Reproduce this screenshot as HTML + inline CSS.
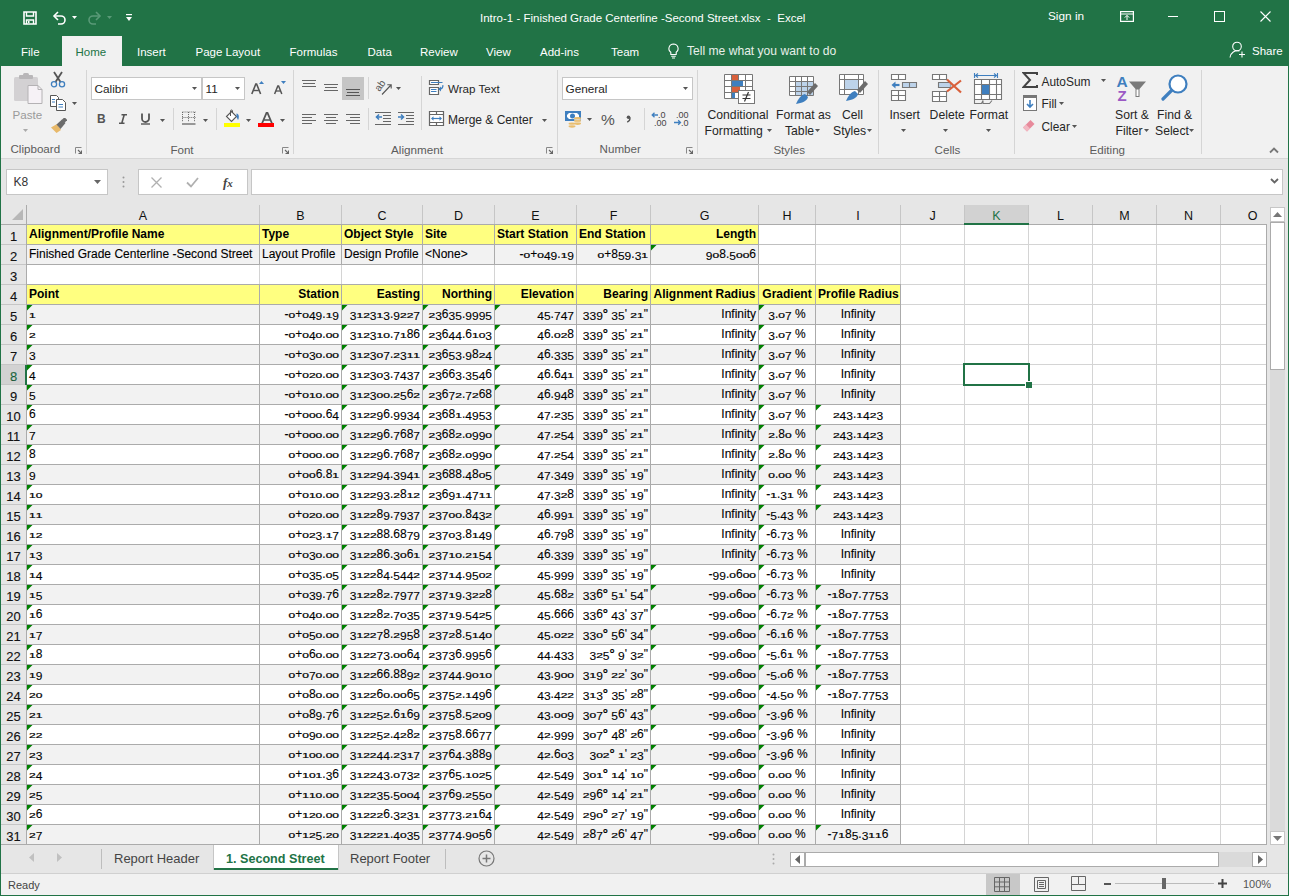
<!DOCTYPE html><html><head><meta charset="utf-8"><style>*{margin:0;padding:0}
html,body{width:1289px;height:896px;overflow:hidden;background:#217346;font-family:"Liberation Sans",sans-serif;position:relative}
.r{position:absolute;display:block}
.t{position:absolute;white-space:pre;line-height:20px}
.c i{font-style:normal;display:inline-block}
.c i.x{-webkit-text-stroke:0.35px #000;transform:scaleY(.66);transform-origin:0 13px}
.c i.d{transform:translateY(2.2px) scaleY(.92);transform-origin:0 13px}
.c u{text-decoration:none;font-weight:700;font-size:13px;line-height:0}
.c{position:absolute;white-space:pre;-webkit-text-stroke:0.1px #000;line-height:19px;height:19px;font-size:12px;color:#000;padding:0 2px;box-sizing:border-box;overflow:hidden}
</style></head><body><div class="r" style="left:0px;top:0px;width:1289px;height:66px;background:#217346;"></div>
<svg class="r" style="left:23px;top:11px;" width="14" height="14" viewBox="0 0 14 14"><path d="M1 1H13V13H1Z" fill="none" stroke="#fff" stroke-width="1.6"/><path d="M3.5 1V5H10.5V1" fill="none" stroke="#fff" stroke-width="1.4"/><path d="M3.5 13V9H10.5V13" fill="none" stroke="#fff" stroke-width="1.4"/><rect x="5" y="10" width="1.5" height="2" fill="#fff"/></svg>
<svg class="r" style="left:52px;top:10px;" width="15" height="15" viewBox="0 0 15 15"><path d="M2 6H9A4 4 0 0 1 9 14H6" fill="none" stroke="#fff" stroke-width="1.6"/><path d="M6 2L2 6L6 10" fill="none" stroke="#fff" stroke-width="1.6"/></svg>
<svg class="r" style="left:72px;top:16px;" width="5" height="3" viewBox="0 0 5 3"><path d="M0 0H5L2.5 3Z" fill="#fff"/></svg>
<svg class="r" style="left:87px;top:10px;" width="15" height="15" viewBox="0 0 15 15"><path d="M13 6H6A4 4 0 0 0 6 14H9" fill="none" stroke="#5a9a78" stroke-width="1.6"/><path d="M9 2L13 6L9 10" fill="none" stroke="#5a9a78" stroke-width="1.6"/></svg>
<svg class="r" style="left:107px;top:16px;" width="5" height="3" viewBox="0 0 5 3"><path d="M0 0H5L2.5 3Z" fill="#5a9a78"/></svg>
<svg class="r" style="left:126px;top:14px;" width="6" height="8" viewBox="0 0 6 8"><rect x="0" y="0" width="6" height="1.2" fill="#fff"/><path d="M0 3H6L3 7Z" fill="#fff"/></svg>
<div class="t" style="left:480px;top:8.02px;font-size:11.5px;color:#fff;font-weight:400;">Intro-1 - Finished Grade Centerline -Second Street.xlsx&nbsp; -&nbsp; Excel</div>
<div class="t" style="left:1048px;top:6.41px;font-size:11.8px;color:#fff;font-weight:400;">Sign in</div>
<svg class="r" style="left:1120px;top:11px;" width="14" height="11" viewBox="0 0 14 11"><rect x="0.6" y="0.6" width="12.8" height="9.8" fill="none" stroke="#fff" stroke-width="1.2"/><path d="M0.6 3H13.4" stroke="#fff" stroke-width="1"/><path d="M7 9V4.5M4.8 6.6L7 4.4L9.2 6.6" fill="none" stroke="#fff" stroke-width="1"/></svg>
<div class="r" style="left:1168px;top:16px;width:10px;height:1px;background:#fff;"></div>
<svg class="r" style="left:1214px;top:11px;" width="11" height="11" viewBox="0 0 11 11"><rect x="0.5" y="0.5" width="10" height="10" fill="none" stroke="#fff" stroke-width="1"/></svg>
<svg class="r" style="left:1260px;top:11px;" width="11" height="11" viewBox="0 0 11 11"><path d="M0.5 0.5L10.5 10.5M10.5 0.5L0.5 10.5" stroke="#fff" stroke-width="1.1"/></svg>
<div class="r" style="left:62px;top:36px;width:60px;height:30px;background:#F1F1F1;"></div>
<div class="t" style="left:21px;top:41.52px;font-size:11.5px;color:#fff;font-weight:400;">File</div>
<div class="t" style="left:75.5px;top:41.52px;font-size:11.5px;color:#217346;font-weight:400;">Home</div>
<div class="t" style="left:137px;top:41.52px;font-size:11.5px;color:#fff;font-weight:400;">Insert</div>
<div class="t" style="left:195.5px;top:41.52px;font-size:11.5px;color:#fff;font-weight:400;">Page Layout</div>
<div class="t" style="left:289.5px;top:41.52px;font-size:11.5px;color:#fff;font-weight:400;">Formulas</div>
<div class="t" style="left:367.5px;top:41.52px;font-size:11.5px;color:#fff;font-weight:400;">Data</div>
<div class="t" style="left:420px;top:41.52px;font-size:11.5px;color:#fff;font-weight:400;">Review</div>
<div class="t" style="left:486px;top:41.52px;font-size:11.5px;color:#fff;font-weight:400;">View</div>
<div class="t" style="left:540px;top:41.52px;font-size:11.5px;color:#fff;font-weight:400;">Add-ins</div>
<div class="t" style="left:611px;top:41.52px;font-size:11.5px;color:#fff;font-weight:400;">Team</div>
<svg class="r" style="left:667px;top:43px;" width="13" height="16" viewBox="0 0 13 16"><path d="M6.5 1A4.6 4.6 0 0 0 3.8 9.3V11.5H9.2V9.3A4.6 4.6 0 0 0 6.5 1Z" fill="none" stroke="#fff" stroke-width="1.1"/><path d="M4.2 13.2H8.8M5 15H8" stroke="#fff" stroke-width="1.1"/></svg>
<div class="t" style="left:687px;top:41.31px;font-size:12.1px;color:#e8f0ea;font-weight:400;">Tell me what you want to do</div>
<svg class="r" style="left:1229px;top:41px;" width="18" height="17" viewBox="0 0 18 17"><circle cx="8" cy="5.5" r="4.3" fill="none" stroke="#fff" stroke-width="1.1"/><path d="M1 16.5A7.5 7.5 0 0 1 10.5 10" fill="none" stroke="#fff" stroke-width="1.1"/><path d="M13 10.5V16.5M10 13.5H16" stroke="#fff" stroke-width="1.1"/></svg>
<div class="t" style="left:1252px;top:41.02px;font-size:11.5px;color:#fff;font-weight:400;">Share</div>
<div class="r" style="left:1px;top:66px;width:1287px;height:92px;background:#F1F1F1;"></div>
<div class="r" style="left:1px;top:158px;width:1287px;height:1px;background:#D6D6D6;"></div>
<div class="r" style="left:86px;top:70px;width:1px;height:84px;background:#D5D5D5;"></div>
<div class="r" style="left:293px;top:70px;width:1px;height:84px;background:#D5D5D5;"></div>
<div class="r" style="left:557px;top:70px;width:1px;height:84px;background:#D5D5D5;"></div>
<div class="r" style="left:697px;top:70px;width:1px;height:84px;background:#D5D5D5;"></div>
<div class="r" style="left:878px;top:70px;width:1px;height:84px;background:#D5D5D5;"></div>
<div class="r" style="left:1014px;top:70px;width:1px;height:84px;background:#D5D5D5;"></div>
<div class="r" style="left:1201px;top:70px;width:1px;height:84px;background:#D5D5D5;"></div>
<svg class="r" style="left:13px;top:73px;" width="30" height="32" viewBox="0 0 30 32"><rect x="1" y="4" width="24" height="24" rx="1.5" fill="#d3d1d3"/><rect x="6" y="2" width="14" height="4" rx="1" fill="#b9b7b9"/><rect x="10" y="0" width="6" height="4" rx="1.5" fill="#b9b7b9"/><path d="M15 12.5H25L29 16.5V30.5H15Z" fill="#f6f2f6" stroke="#b4b2b4" stroke-width="1"/><path d="M25 12.5V16.5H29" fill="none" stroke="#b4b2b4" stroke-width="1"/></svg>
<div class="t" style="left:12.6px;top:104.58px;font-size:11.6px;color:#9a9a9a;font-weight:400;">Paste</div>
<svg class="r" style="left:23px;top:129px;" width="5" height="3" viewBox="0 0 5 3"><path d="M0 0H5L2.5 3Z" fill="#aaa"/></svg>
<svg class="r" style="left:50px;top:71px;" width="16" height="17" viewBox="0 0 16 17"><path d="M4 1L10.5 11M12 1L5.5 11" stroke="#555" stroke-width="1.8"/><circle cx="4" cy="13.2" r="2.6" fill="none" stroke="#3f7fbf" stroke-width="1.3"/><circle cx="12" cy="13.2" r="2.6" fill="none" stroke="#3f7fbf" stroke-width="1.3"/></svg>
<svg class="r" style="left:50px;top:95px;" width="16" height="16" viewBox="0 0 16 16"><path d="M0.5 0.5H6.5L8.5 2.5V11.5H0.5Z" fill="#fff" stroke="#555" stroke-width="1"/><path d="M6.5 4.5H12.5L15.5 7.5V15.5H6.5Z" fill="#fff" stroke="#555" stroke-width="1"/><path d="M2 4.5H5M2 7H5M8.5 9.5H13M8.5 12H13" stroke="#3f7fbf" stroke-width="1"/></svg>
<svg class="r" style="left:72px;top:102px;" width="5" height="3" viewBox="0 0 5 3"><path d="M0 0H5L2.5 3Z" fill="#555"/></svg>
<svg class="r" style="left:50px;top:118px;" width="17" height="16" viewBox="0 0 17 16"><path d="M1 9.5L7 6L11 12L6.5 15Z" fill="#e8b96a"/><path d="M6.5 6.5L12 1.5L15.5 5L10.5 11Z" fill="#6b6b6b"/><rect x="12.5" y="0" width="4" height="4" transform="rotate(45 14.5 2)" fill="#6b6b6b"/></svg>
<div class="t" style="left:10.5px;top:139.48px;font-size:11.6px;color:#5c5c5c;font-weight:400;">Clipboard</div>
<svg class="r" style="left:75px;top:147px;" width="7" height="7" viewBox="0 0 7 7"><path d="M0.5 6.5V0.5H6.5" fill="none" stroke="#888" stroke-width="1"/><path d="M3 3L6.5 6.5M6.5 3.5V6.5H3.5" fill="none" stroke="#666" stroke-width="1.1"/></svg>
<div class="r" style="left:91px;top:77px;width:111px;height:23px;background:#fff;box-sizing:border-box;border:1px solid #C6C6C6;"></div>
<div class="r" style="left:202px;top:77px;width:43px;height:23px;background:#fff;box-sizing:border-box;border:1px solid #C6C6C6;"></div>
<div class="t" style="left:94.5px;top:78.91px;font-size:11.8px;color:#262626;font-weight:400;">Calibri</div>
<svg class="r" style="left:192px;top:87px;" width="5" height="3" viewBox="0 0 5 3"><path d="M0 0H5L2.5 3Z" fill="#555"/></svg>
<div class="t" style="left:205.5px;top:78.91px;font-size:11.8px;color:#262626;font-weight:400;">11</div>
<svg class="r" style="left:235px;top:87px;" width="5" height="3" viewBox="0 0 5 3"><path d="M0 0H5L2.5 3Z" fill="#555"/></svg>
<svg class="r" style="left:250px;top:80px;" width="15" height="15" viewBox="0 0 15 15"><path d="M1.8 14L5.8 4H6.6L10.6 14" fill="none" stroke="#555" stroke-width="1.6"/><path d="M3.6 10.5H8.8" stroke="#555" stroke-width="1.4"/><path d="M9 4L11.5 1L14 4Z" fill="#3f7fbf"/></svg>
<svg class="r" style="left:273px;top:80px;" width="14" height="15" viewBox="0 0 14 15"><path d="M1.6 14L4.8 6H5.6L8.8 14" fill="none" stroke="#555" stroke-width="1.5"/><path d="M3 11H7.4" stroke="#555" stroke-width="1.3"/><path d="M8 1H13L10.5 4Z" fill="#3f7fbf"/></svg>
<div class="t" style="left:97px;top:109.34px;font-size:12px;color:#555;font-weight:700;">B</div>
<svg class="r" style="left:118px;top:114px;" width="10" height="10" viewBox="0 0 10 10"><path d="M3.5 0.8H9M1 9.2H6.5M6.2 0.8L3.8 9.2" fill="none" stroke="#555" stroke-width="1.6"/></svg>
<svg class="r" style="left:140px;top:113px;" width="11" height="12" viewBox="0 0 11 12"><path d="M2 0.5V5.5A3.5 3.5 0 0 0 9 5.5V0.5" fill="none" stroke="#555" stroke-width="1.8"/><path d="M1 11H10" stroke="#555" stroke-width="1.4"/></svg>
<svg class="r" style="left:160px;top:119px;" width="5" height="3" viewBox="0 0 5 3"><path d="M0 0H5L2.5 3Z" fill="#555"/></svg>
<div class="r" style="left:173px;top:108px;width:1px;height:22px;background:#D5D5D5;"></div>
<svg class="r" style="left:182px;top:111px;" width="14" height="14" viewBox="0 0 14 14"><path d="M0.5 1H13.5M0.5 6.5H13.5M0.5 1V11M6.5 1V11M12.5 1V11" stroke="#666" stroke-width="1" stroke-dasharray="1 1.05"/><path d="M0 13H13.5" stroke="#666" stroke-width="1.3"/></svg>
<svg class="r" style="left:203px;top:119px;" width="5" height="3" viewBox="0 0 5 3"><path d="M0 0H5L2.5 3Z" fill="#555"/></svg>
<div class="r" style="left:216px;top:108px;width:1px;height:22px;background:#D5D5D5;"></div>
<svg class="r" style="left:224px;top:109px;" width="17" height="14" viewBox="0 0 17 14"><path d="M2.5 7.5L7.5 2.5L12.5 7.5L7.5 12.5Z" fill="#fff" stroke="#555" stroke-width="1.1"/><path d="M6.5 7V2A1 1 0 0 1 8.5 2V4" fill="none" stroke="#555" stroke-width="1"/><path d="M12.5 4.5C15 5 15.5 8 14 11L12.5 8Z" fill="#3f7fbf"/></svg>
<div class="r" style="left:224px;top:123px;width:16px;height:4px;background:#FFFF00;"></div>
<svg class="r" style="left:245.5px;top:119px;" width="5" height="3" viewBox="0 0 5 3"><path d="M0 0H5L2.5 3Z" fill="#555"/></svg>
<svg class="r" style="left:261px;top:112px;" width="12" height="12" viewBox="0 0 12 12"><path d="M1 11.5L5.5 1H6.5L11 11.5" fill="none" stroke="#555" stroke-width="1.8"/><path d="M3 8H9" stroke="#555" stroke-width="1.5"/></svg>
<div class="r" style="left:258px;top:123px;width:16px;height:4px;background:#FF0000;"></div>
<svg class="r" style="left:280px;top:119px;" width="5" height="3" viewBox="0 0 5 3"><path d="M0 0H5L2.5 3Z" fill="#555"/></svg>
<div class="t" style="left:170.4px;top:139.98px;font-size:11.6px;color:#5c5c5c;font-weight:400;">Font</div>
<svg class="r" style="left:282px;top:147px;" width="7" height="7" viewBox="0 0 7 7"><path d="M0.5 6.5V0.5H6.5" fill="none" stroke="#888" stroke-width="1"/><path d="M3 3L6.5 6.5M6.5 3.5V6.5H3.5" fill="none" stroke="#666" stroke-width="1.1"/></svg>
<svg class="r" style="left:302px;top:79px;" width="15" height="9" viewBox="0 0 15 9"><path d="M0 1.5H14M1 4.5H13M0 7.5H14" stroke="#666" stroke-width="1"/></svg>
<svg class="r" style="left:324px;top:83px;" width="15" height="9" viewBox="0 0 15 9"><path d="M0 1.5H14M1 4.5H13M0 7.5H14" stroke="#666" stroke-width="1"/></svg>
<div class="r" style="left:342px;top:77px;width:22px;height:23px;background:#C5C5C5;"></div>
<svg class="r" style="left:346px;top:88px;" width="15" height="9" viewBox="0 0 15 9"><path d="M0 1.5H14M1 4.5H13M0 7.5H14" stroke="#555" stroke-width="1"/></svg>
<div class="r" style="left:368px;top:77px;width:1px;height:22px;background:#D5D5D5;"></div>
<svg class="r" style="left:375px;top:79px;" width="18" height="17" viewBox="0 0 18 17"><text x="0" y="0" font-family="Liberation Sans" font-size="10" fill="#555" transform="translate(4.5 13) rotate(-55)">ab</text><path d="M7 15.5L16 6M12.3 5.8H16.2V9.6" fill="none" stroke="#555" stroke-width="1.1"/></svg>
<svg class="r" style="left:396px;top:87px;" width="5" height="3" viewBox="0 0 5 3"><path d="M0 0H5L2.5 3Z" fill="#555"/></svg>
<div class="r" style="left:421px;top:76px;width:1px;height:54px;background:#D5D5D5;"></div>
<svg class="r" style="left:302px;top:113px;" width="15" height="12" viewBox="0 0 15 12"><path d="M0 1.5H14M0 4.5H10M0 7.5H14M0 10.5H10" stroke="#666" stroke-width="1"/></svg>
<svg class="r" style="left:324px;top:113px;" width="15" height="12" viewBox="0 0 15 12"><path d="M0 1.5H14M2 4.5H12M0 7.5H14M2 10.5H12" stroke="#666" stroke-width="1"/></svg>
<svg class="r" style="left:346px;top:113px;" width="15" height="12" viewBox="0 0 15 12"><path d="M0 1.5H14M4 4.5H14M0 7.5H14M4 10.5H14" stroke="#666" stroke-width="1"/></svg>
<div class="r" style="left:368px;top:108px;width:1px;height:22px;background:#D5D5D5;"></div>
<svg class="r" style="left:375px;top:111px;" width="17" height="14" viewBox="0 0 17 14"><path d="M0 1.5H16M8 4.5H16M8 7.5H16M8 10.5H16M0 13.5H16" stroke="#666" stroke-width="1"/><path d="M1.5 6H7M4 3.5L1.5 6L4 8.5" fill="none" stroke="#3f7fbf" stroke-width="1.6"/></svg>
<svg class="r" style="left:398px;top:111px;" width="17" height="14" viewBox="0 0 17 14"><path d="M0 1.5H16M8 4.5H16M8 7.5H16M8 10.5H16M0 13.5H16" stroke="#666" stroke-width="1"/><path d="M0 6H5.5M3 3.5L5.5 6L3 8.5" fill="none" stroke="#3f7fbf" stroke-width="1.6"/></svg>
<svg class="r" style="left:428px;top:79px;" width="17" height="17" viewBox="0 0 17 17"><path d="M1.5 1.5H10.5V5.5H1.5ZM1.5 8.5H10.5V15.5H1.5Z" fill="#fff" stroke="#666" stroke-width="1.2"/><path d="M3 3.5H14.5M3 10.5H8.5M3 12.5H8.5" stroke="#3f7fbf" stroke-width="1"/><path d="M14.8 6.2C15.2 8.5 14 10 11.2 10" fill="none" stroke="#3f7fbf" stroke-width="1.3"/><path d="M10.3 10L13 7.6V12.4Z" fill="#3f7fbf"/></svg>
<div class="t" style="left:448px;top:79.18px;font-size:11.6px;color:#262626;font-weight:400;">Wrap Text</div>
<svg class="r" style="left:428px;top:110px;" width="17" height="17" viewBox="0 0 17 17"><path d="M1.5 1.5H15.5V15.5H1.5ZM1.5 4.5H15.5M1.5 12.5H15.5M8.5 1.5V4.5M8.5 12.5V15.5" fill="#fff" stroke="#666" stroke-width="1.2"/><path d="M4 8.5H13" stroke="#3f7fbf" stroke-width="1.2"/><path d="M3 8.5L5.5 6.3V10.7ZM14 8.5L11.5 6.3V10.7Z" fill="#3f7fbf"/></svg>
<div class="t" style="left:448px;top:109.84px;font-size:12px;color:#262626;font-weight:400;">Merge &amp; Center</div>
<svg class="r" style="left:542px;top:119px;" width="5" height="3" viewBox="0 0 5 3"><path d="M0 0H5L2.5 3Z" fill="#555"/></svg>
<div class="t" style="left:391px;top:139.95px;font-size:11.7px;color:#5c5c5c;font-weight:400;">Alignment</div>
<svg class="r" style="left:546px;top:147px;" width="7" height="7" viewBox="0 0 7 7"><path d="M0.5 6.5V0.5H6.5" fill="none" stroke="#888" stroke-width="1"/><path d="M3 3L6.5 6.5M6.5 3.5V6.5H3.5" fill="none" stroke="#666" stroke-width="1.1"/></svg>
<div class="r" style="left:562px;top:77px;width:131px;height:23px;background:#fff;box-sizing:border-box;border:1px solid #C6C6C6;"></div>
<div class="t" style="left:565.5px;top:78.91px;font-size:11.8px;color:#262626;font-weight:400;">General</div>
<svg class="r" style="left:683px;top:87px;" width="5" height="3" viewBox="0 0 5 3"><path d="M0 0H5L2.5 3Z" fill="#555"/></svg>
<svg class="r" style="left:565px;top:111px;" width="17" height="17" viewBox="0 0 17 17"><rect x="0" y="0" width="16" height="10" fill="#3f7fbf"/><path d="M2 2H14V8H2Z" fill="#fff"/><circle cx="7.5" cy="5" r="2.5" fill="#3f7fbf"/><path d="M2 2L4 2L2 4ZM14 2L12 2L14 4ZM2 8L4 8L2 6ZM14 8L12 8L14 6Z" fill="#3f7fbf"/><g fill="#e9bd6e"><ellipse cx="12.5" cy="7.5" rx="3.5" ry="1.4"/><ellipse cx="12.5" cy="10" rx="3.5" ry="1.4"/><ellipse cx="12.5" cy="12.5" rx="3.5" ry="1.4"/><ellipse cx="7" cy="12.8" rx="3.5" ry="1.4"/><ellipse cx="7" cy="15.3" rx="3.5" ry="1.4"/></g><g stroke="#f1f1f1" stroke-width="0.6" fill="none"><path d="M9 8.7H16M9 11.2H16M3.5 14H10.5"/></g></svg>
<svg class="r" style="left:587px;top:118px;" width="5" height="3" viewBox="0 0 5 3"><path d="M0 0H5L2.5 3Z" fill="#555"/></svg>
<div class="t" style="left:601px;top:109.93px;font-size:15.5px;color:#555;font-weight:400;">%</div>
<svg class="r" style="left:625px;top:115px;" width="7" height="8" viewBox="0 0 7 8"><circle cx="3.5" cy="2.2" r="1.8" fill="#555"/><path d="M5 2.5C5.2 4.5 4 6.3 2.2 7.2" fill="none" stroke="#555" stroke-width="1.3"/></svg>
<div class="r" style="left:644px;top:108px;width:1px;height:22px;background:#D5D5D5;"></div>
<svg class="r" style="left:651px;top:111px;" width="17" height="16" viewBox="0 0 17 16"><text x="7" y="7" font-family="Liberation Sans" font-size="9" fill="#444">.0</text><text x="3" y="14.5" font-family="Liberation Sans" font-size="9" fill="#444">.00</text><path d="M1.2 4H7M3.5 1.7L1.2 4L3.5 6.3" fill="none" stroke="#3f7fbf" stroke-width="1.3"/></svg>
<svg class="r" style="left:673px;top:111px;" width="17" height="16" viewBox="0 0 17 16"><text x="3" y="7" font-family="Liberation Sans" font-size="9" fill="#444">.00</text><text x="8" y="14.5" font-family="Liberation Sans" font-size="9" fill="#444">.0</text><path d="M1 11.5H7.5M5.2 9.2L7.5 11.5L5.2 13.8" fill="none" stroke="#3f7fbf" stroke-width="1.3"/></svg>
<div class="t" style="left:599.6px;top:139.48px;font-size:11.6px;color:#5c5c5c;font-weight:400;">Number</div>
<svg class="r" style="left:686px;top:147px;" width="7" height="7" viewBox="0 0 7 7"><path d="M0.5 6.5V0.5H6.5" fill="none" stroke="#888" stroke-width="1"/><path d="M3 3L6.5 6.5M6.5 3.5V6.5H3.5" fill="none" stroke="#666" stroke-width="1.1"/></svg>
<svg class="r" style="left:723px;top:73px;" width="32" height="32" viewBox="0 0 32 32"><path d="M1.5 1.5H29.5V25.5H1.5Z" fill="#fff" stroke="#777" stroke-width="1"/><path d="M1.5 7.5H29.5M1.5 13.5H29.5M1.5 19.5H29.5M8.5 1.5V25.5M15.5 1.5V25.5M22.5 1.5V25.5" stroke="#777" stroke-width="1"/><rect x="9" y="2" width="6" height="5" fill="#d9603b"/><rect x="9" y="8" width="11" height="5" fill="#3f7fbf"/><rect x="9" y="14" width="8" height="5" fill="#d9603b"/><rect x="9" y="20" width="3" height="5" fill="#3f7fbf"/><rect x="15.5" y="17.5" width="16" height="13" fill="#fff" stroke="#777" stroke-width="1"/><path d="M19.5 22H27.5M19.5 25.5H27.5M25.5 19L21.5 28.5" stroke="#333" stroke-width="1.2"/></svg>
<div class="t" style="left:707.5px;top:104.57px;font-size:12.2px;color:#262626;font-weight:400;">Conditional</div>
<div class="t" style="left:704.6px;top:120.77px;font-size:12.2px;color:#262626;font-weight:400;">Formatting</div>
<svg class="r" style="left:766.5px;top:129px;" width="5" height="3" viewBox="0 0 5 3"><path d="M0 0H5L2.5 3Z" fill="#555"/></svg>
<svg class="r" style="left:788px;top:75px;" width="31" height="30" viewBox="0 0 31 30"><path d="M1.5 1.5H25.5V20.5H1.5Z" fill="#fff" stroke="#777" stroke-width="1"/><rect x="7" y="6" width="18" height="14" fill="#bdd3ea"/><path d="M1.5 6.5H25.5M1.5 11.5H25.5M1.5 16.5H25.5M7.5 1.5V20.5M13.5 1.5V20.5M19.5 1.5V20.5" stroke="#777" stroke-width="1"/><path d="M19 17L27 8L30 11L22 20Z" fill="#6b6b6b"/><path d="M8 29C10 24 13 20 17 19L20 22C19 26 14 28 8 29Z" fill="#3f7fbf"/></svg>
<div class="t" style="left:776px;top:104.57px;font-size:12.2px;color:#262626;font-weight:400;">Format as</div>
<div class="t" style="left:785px;top:120.77px;font-size:12.2px;color:#262626;font-weight:400;">Table</div>
<svg class="r" style="left:815px;top:129px;" width="5" height="3" viewBox="0 0 5 3"><path d="M0 0H5L2.5 3Z" fill="#555"/></svg>
<svg class="r" style="left:838px;top:73px;" width="31" height="30" viewBox="0 0 31 30"><path d="M1.5 1.5H25.5V21.5H1.5Z" fill="#fff" stroke="#777" stroke-width="1"/><rect x="7" y="6" width="14" height="11" fill="#bdd3ea"/><path d="M1.5 6.5H25.5M1.5 16.5H25.5M6.5 1.5V21.5M20.5 1.5V21.5" stroke="#777" stroke-width="1"/><path d="M19 17L27 8L30 11L22 20Z" fill="#6b6b6b"/><path d="M8 28C10 23 13 19 17 18L20 21C19 25 14 27 8 28Z" fill="#3f7fbf"/></svg>
<div class="t" style="left:842px;top:104.57px;font-size:12.2px;color:#262626;font-weight:400;">Cell</div>
<div class="t" style="left:833px;top:120.77px;font-size:12.2px;color:#262626;font-weight:400;">Styles</div>
<svg class="r" style="left:866.7px;top:129px;" width="5" height="3" viewBox="0 0 5 3"><path d="M0 0H5L2.5 3Z" fill="#555"/></svg>
<div class="t" style="left:773.4px;top:139.68px;font-size:11.6px;color:#5c5c5c;font-weight:400;">Styles</div>
<svg class="r" style="left:890px;top:73px;" width="28" height="29" viewBox="0 0 28 29"><path d="M1.5 1.5H15.5V6.5H1.5ZM8.5 1.5V6.5M1.5 17.5H15.5V27.5H1.5ZM1.5 22.5H15.5M8.5 17.5V27.5" fill="#fff" stroke="#777" stroke-width="1.1"/><path d="M12.5 9.5H26.5V14.5H12.5Z" fill="#bdd3ea" stroke="#777" stroke-width="1.1"/><path d="M19.5 9.5V14.5" stroke="#777" stroke-width="1.1"/><path d="M4.5 12H9.5" stroke="#3f7fbf" stroke-width="2.2"/><path d="M1.5 12L5.5 8.5V15.5Z" fill="#3f7fbf"/></svg>
<div class="t" style="left:889.4px;top:104.77px;font-size:12.2px;color:#262626;font-weight:400;">Insert</div>
<svg class="r" style="left:901px;top:129px;" width="5" height="3" viewBox="0 0 5 3"><path d="M0 0H5L2.5 3Z" fill="#555"/></svg>
<svg class="r" style="left:931px;top:73px;" width="32" height="30" viewBox="0 0 32 30"><path d="M1.5 1.5H15.5V6.5H1.5ZM8.5 1.5V6.5M1.5 18.5H15.5V28.5H1.5ZM1.5 23.5H15.5M8.5 18.5V28.5" fill="#fff" stroke="#777" stroke-width="1.1"/><path d="M7.5 9.5H19.5V14.5H7.5Z" fill="#bdd3ea" stroke="#777" stroke-width="1.1"/><path d="M19.5 9.5L22 12L19.5 14.5Z" fill="#bdd3ea"/><path d="M16 6.5L30 19.5M30 7.5L16 18.5" stroke="#d9603b" stroke-width="2.2"/></svg>
<div class="t" style="left:929.6px;top:104.77px;font-size:12.2px;color:#262626;font-weight:400;">Delete</div>
<svg class="r" style="left:943px;top:129px;" width="5" height="3" viewBox="0 0 5 3"><path d="M0 0H5L2.5 3Z" fill="#555"/></svg>
<svg class="r" style="left:973px;top:72px;" width="30" height="33" viewBox="0 0 30 33"><path d="M1.5 1V6M24.5 1V6M2.5 3.5H23.5" fill="none" stroke="#3f7fbf" stroke-width="1.1"/><path d="M5 1.5L2.5 3.5L5 5.5M21 1.5L23.5 3.5L21 5.5" fill="none" stroke="#3f7fbf" stroke-width="1.1"/><path d="M1.5 7.5H28.5V27.5H1.5Z" fill="#fff" stroke="#777" stroke-width="1.1"/><path d="M1.5 12.5H28.5M1.5 22.5H28.5M8.5 7.5V27.5M16.5 7.5V27.5M23.5 7.5V27.5" stroke="#777" stroke-width="1.1"/><rect x="9" y="13" width="7.2" height="9.2" fill="#3f7fbf"/><path d="M1.5 27.5V31.5H8.5L10 28.5V31.5H16.5L19 28.5" fill="none" stroke="#777" stroke-width="1.1"/></svg>
<div class="t" style="left:969.5px;top:104.77px;font-size:12.2px;color:#262626;font-weight:400;">Format</div>
<svg class="r" style="left:986px;top:129px;" width="5" height="3" viewBox="0 0 5 3"><path d="M0 0H5L2.5 3Z" fill="#555"/></svg>
<div class="t" style="left:934.6px;top:139.68px;font-size:11.6px;color:#5c5c5c;font-weight:400;">Cells</div>
<svg class="r" style="left:1022px;top:72px;" width="16" height="16" viewBox="0 0 16 16"><path d="M15 3V1H1.5L8 8L1.5 15H15V13" fill="none" stroke="#444" stroke-width="2"/></svg>
<div class="t" style="left:1041.5px;top:71.88px;font-size:11.9px;color:#262626;font-weight:400;">AutoSum</div>
<svg class="r" style="left:1101px;top:79px;" width="5" height="3" viewBox="0 0 5 3"><path d="M0 0H5L2.5 3Z" fill="#555"/></svg>
<svg class="r" style="left:1023px;top:95px;" width="14" height="16" viewBox="0 0 14 16"><rect x="0.5" y="0.5" width="13" height="15" fill="#fff" stroke="#777"/><rect x="0.5" y="0.5" width="13" height="2.5" fill="#777"/><path d="M7 5V12M4 9L7 12L10 9" fill="none" stroke="#3f7fbf" stroke-width="1.6"/></svg>
<div class="t" style="left:1041.5px;top:94.18px;font-size:11.9px;color:#262626;font-weight:400;">Fill</div>
<svg class="r" style="left:1059px;top:102px;" width="5" height="3" viewBox="0 0 5 3"><path d="M0 0H5L2.5 3Z" fill="#555"/></svg>
<svg class="r" style="left:1022px;top:119px;" width="15" height="13" viewBox="0 0 15 13"><path d="M5 12.5L1 8.5L8.5 1L12.5 5Z" fill="#e78a9b"/><path d="M1 8.5L4 5.5L8 9.5L5 12.5Z" fill="#f2b8c2"/></svg>
<div class="t" style="left:1041.5px;top:116.88px;font-size:11.9px;color:#262626;font-weight:400;">Clear</div>
<svg class="r" style="left:1071.7px;top:125px;" width="5" height="3" viewBox="0 0 5 3"><path d="M0 0H5L2.5 3Z" fill="#555"/></svg>
<svg class="r" style="left:1116px;top:74px;" width="31" height="28" viewBox="0 0 31 28"><text x="0.5" y="13" font-family="Liberation Sans" font-size="15.5" fill="#3f7fbf" font-weight="700">A</text><text x="1.5" y="27" font-family="Liberation Sans" font-size="15" fill="#9b59c4" font-weight="700">Z</text><path d="M13 7.5H30L23.5 15V23H19.5V15Z" fill="#7a7a7a"/><path d="M20.5 15.5V22H22.5V15.5" fill="#fff"/></svg>
<div class="t" style="left:1115px;top:104.57px;font-size:12.2px;color:#262626;font-weight:400;">Sort &amp;</div>
<div class="t" style="left:1115.5px;top:120.77px;font-size:12.2px;color:#262626;font-weight:400;">Filter</div>
<svg class="r" style="left:1144px;top:129px;" width="5" height="3" viewBox="0 0 5 3"><path d="M0 0H5L2.5 3Z" fill="#555"/></svg>
<svg class="r" style="left:1160px;top:74px;" width="28" height="27" viewBox="0 0 28 27"><circle cx="18" cy="10" r="8.5" fill="#fff" stroke="#3f7fbf" stroke-width="2.2"/><path d="M11.5 16.5L3 25" stroke="#3f7fbf" stroke-width="3.2" stroke-linecap="round"/></svg>
<div class="t" style="left:1157px;top:104.57px;font-size:12.2px;color:#262626;font-weight:400;">Find &amp;</div>
<div class="t" style="left:1155px;top:120.77px;font-size:12.2px;color:#262626;font-weight:400;">Select</div>
<svg class="r" style="left:1189px;top:129px;" width="5" height="3" viewBox="0 0 5 3"><path d="M0 0H5L2.5 3Z" fill="#555"/></svg>
<div class="t" style="left:1089.6px;top:139.98px;font-size:11.6px;color:#5c5c5c;font-weight:400;">Editing</div>
<svg class="r" style="left:1269px;top:147px;" width="10" height="7" viewBox="0 0 10 7"><path d="M1 5.5L5 1.5L9 5.5" fill="none" stroke="#777" stroke-width="1.8"/></svg>
<div class="r" style="left:1px;top:159px;width:1287px;height:46px;background:#E6E6E6;"></div>
<div class="r" style="left:6px;top:169px;width:102px;height:26px;background:#fff;box-sizing:border-box;border:1px solid #C6C6C6;"></div>
<div class="t" style="left:13.5px;top:171.84px;font-size:12px;color:#333;font-weight:400;">K8</div>
<svg class="r" style="left:94px;top:180px;" width="7" height="4" viewBox="0 0 7 4"><path d="M0 0H7L3.5 4Z" fill="#666"/></svg>
<svg class="r" style="left:122px;top:176px;" width="3" height="12" viewBox="0 0 3 12"><circle cx="1.5" cy="1.5" r="1" fill="#999"/><circle cx="1.5" cy="6" r="1" fill="#999"/><circle cx="1.5" cy="10.5" r="1" fill="#999"/></svg>
<div class="r" style="left:138px;top:169px;width:110px;height:26px;background:#fff;box-sizing:border-box;border:1px solid #C6C6C6;"></div>
<svg class="r" style="left:151px;top:177px;" width="11" height="11" viewBox="0 0 11 11"><path d="M0.5 0.5L10.5 10.5M10.5 0.5L0.5 10.5" stroke="#b0b0b0" stroke-width="1.3"/></svg>
<svg class="r" style="left:186px;top:177px;" width="13" height="11" viewBox="0 0 13 11"><path d="M1 5.5L5 9.5L12 1" fill="none" stroke="#b0b0b0" stroke-width="1.8"/></svg>
<div class="t" style="left:223px;top:172.50px;font-size:13px;color:#444;font-weight:700;font-family:'Liberation Serif',serif;"><i>f</i><span style="font-size:11px"><i>x</i></span></div>
<div class="r" style="left:251px;top:169px;width:1032px;height:26px;background:#fff;box-sizing:border-box;border:1px solid #C6C6C6;"></div>
<svg class="r" style="left:1270px;top:178px;" width="9" height="6" viewBox="0 0 9 6"><path d="M1 1L4.5 4.5L8 1" fill="none" stroke="#666" stroke-width="1.8"/></svg>
<div class="r" style="left:1px;top:205px;width:1265px;height:19px;background:#E6E6E6;"></div>
<div class="r" style="left:1px;top:225px;width:25px;height:620px;background:#E6E6E6;"></div>
<svg class="r" style="left:12px;top:209px;" width="11" height="11" viewBox="0 0 11 11"><path d="M11 0V11H0Z" fill="#b7b7b7"/></svg>
<div class="r" style="left:27px;top:225px;width:1239px;height:620px;background:#fff;"></div>
<div class="r" style="left:964px;top:205px;width:65px;height:18px;background:#D2D2D2;"></div>
<div class="r" style="left:1px;top:365px;width:25px;height:19px;background:#D2D2D2;"></div>
<div class="r" style="left:27px;top:225px;width:232px;height:19px;background:#FFFF80;"></div>
<div class="r" style="left:260px;top:225px;width:81px;height:19px;background:#FFFF80;"></div>
<div class="r" style="left:342px;top:225px;width:80px;height:19px;background:#FFFF80;"></div>
<div class="r" style="left:423px;top:225px;width:71px;height:19px;background:#FFFF80;"></div>
<div class="r" style="left:495px;top:225px;width:81px;height:19px;background:#FFFF80;"></div>
<div class="r" style="left:577px;top:225px;width:73px;height:19px;background:#FFFF80;"></div>
<div class="r" style="left:651px;top:225px;width:107px;height:19px;background:#FFFF80;"></div>
<div class="r" style="left:27px;top:245px;width:232px;height:19px;background:#F2F2F2;"></div>
<div class="r" style="left:260px;top:245px;width:81px;height:19px;background:#F2F2F2;"></div>
<div class="r" style="left:342px;top:245px;width:80px;height:19px;background:#F2F2F2;"></div>
<div class="r" style="left:423px;top:245px;width:71px;height:19px;background:#F2F2F2;"></div>
<div class="r" style="left:495px;top:245px;width:81px;height:19px;background:#F2F2F2;"></div>
<div class="r" style="left:577px;top:245px;width:73px;height:19px;background:#F2F2F2;"></div>
<div class="r" style="left:651px;top:245px;width:107px;height:19px;background:#F2F2F2;"></div>
<div class="r" style="left:27px;top:285px;width:232px;height:19px;background:#FFFF80;"></div>
<div class="r" style="left:260px;top:285px;width:81px;height:19px;background:#FFFF80;"></div>
<div class="r" style="left:342px;top:285px;width:80px;height:19px;background:#FFFF80;"></div>
<div class="r" style="left:423px;top:285px;width:71px;height:19px;background:#FFFF80;"></div>
<div class="r" style="left:495px;top:285px;width:81px;height:19px;background:#FFFF80;"></div>
<div class="r" style="left:577px;top:285px;width:73px;height:19px;background:#FFFF80;"></div>
<div class="r" style="left:651px;top:285px;width:107px;height:19px;background:#FFFF80;"></div>
<div class="r" style="left:759px;top:285px;width:56px;height:19px;background:#FFFF80;"></div>
<div class="r" style="left:816px;top:285px;width:84px;height:19px;background:#FFFF80;"></div>
<div class="r" style="left:27px;top:305px;width:232px;height:19px;background:#F2F2F2;"></div>
<div class="r" style="left:260px;top:305px;width:81px;height:19px;background:#F2F2F2;"></div>
<div class="r" style="left:342px;top:305px;width:80px;height:19px;background:#F2F2F2;"></div>
<div class="r" style="left:423px;top:305px;width:71px;height:19px;background:#F2F2F2;"></div>
<div class="r" style="left:495px;top:305px;width:81px;height:19px;background:#F2F2F2;"></div>
<div class="r" style="left:577px;top:305px;width:73px;height:19px;background:#F2F2F2;"></div>
<div class="r" style="left:651px;top:305px;width:107px;height:19px;background:#F2F2F2;"></div>
<div class="r" style="left:759px;top:305px;width:56px;height:19px;background:#F2F2F2;"></div>
<div class="r" style="left:816px;top:305px;width:84px;height:19px;background:#F2F2F2;"></div>
<div class="r" style="left:27px;top:345px;width:232px;height:19px;background:#F2F2F2;"></div>
<div class="r" style="left:260px;top:345px;width:81px;height:19px;background:#F2F2F2;"></div>
<div class="r" style="left:342px;top:345px;width:80px;height:19px;background:#F2F2F2;"></div>
<div class="r" style="left:423px;top:345px;width:71px;height:19px;background:#F2F2F2;"></div>
<div class="r" style="left:495px;top:345px;width:81px;height:19px;background:#F2F2F2;"></div>
<div class="r" style="left:577px;top:345px;width:73px;height:19px;background:#F2F2F2;"></div>
<div class="r" style="left:651px;top:345px;width:107px;height:19px;background:#F2F2F2;"></div>
<div class="r" style="left:759px;top:345px;width:56px;height:19px;background:#F2F2F2;"></div>
<div class="r" style="left:816px;top:345px;width:84px;height:19px;background:#F2F2F2;"></div>
<div class="r" style="left:27px;top:385px;width:232px;height:19px;background:#F2F2F2;"></div>
<div class="r" style="left:260px;top:385px;width:81px;height:19px;background:#F2F2F2;"></div>
<div class="r" style="left:342px;top:385px;width:80px;height:19px;background:#F2F2F2;"></div>
<div class="r" style="left:423px;top:385px;width:71px;height:19px;background:#F2F2F2;"></div>
<div class="r" style="left:495px;top:385px;width:81px;height:19px;background:#F2F2F2;"></div>
<div class="r" style="left:577px;top:385px;width:73px;height:19px;background:#F2F2F2;"></div>
<div class="r" style="left:651px;top:385px;width:107px;height:19px;background:#F2F2F2;"></div>
<div class="r" style="left:759px;top:385px;width:56px;height:19px;background:#F2F2F2;"></div>
<div class="r" style="left:816px;top:385px;width:84px;height:19px;background:#F2F2F2;"></div>
<div class="r" style="left:27px;top:425px;width:232px;height:19px;background:#F2F2F2;"></div>
<div class="r" style="left:260px;top:425px;width:81px;height:19px;background:#F2F2F2;"></div>
<div class="r" style="left:342px;top:425px;width:80px;height:19px;background:#F2F2F2;"></div>
<div class="r" style="left:423px;top:425px;width:71px;height:19px;background:#F2F2F2;"></div>
<div class="r" style="left:495px;top:425px;width:81px;height:19px;background:#F2F2F2;"></div>
<div class="r" style="left:577px;top:425px;width:73px;height:19px;background:#F2F2F2;"></div>
<div class="r" style="left:651px;top:425px;width:107px;height:19px;background:#F2F2F2;"></div>
<div class="r" style="left:759px;top:425px;width:56px;height:19px;background:#F2F2F2;"></div>
<div class="r" style="left:816px;top:425px;width:84px;height:19px;background:#F2F2F2;"></div>
<div class="r" style="left:27px;top:465px;width:232px;height:19px;background:#F2F2F2;"></div>
<div class="r" style="left:260px;top:465px;width:81px;height:19px;background:#F2F2F2;"></div>
<div class="r" style="left:342px;top:465px;width:80px;height:19px;background:#F2F2F2;"></div>
<div class="r" style="left:423px;top:465px;width:71px;height:19px;background:#F2F2F2;"></div>
<div class="r" style="left:495px;top:465px;width:81px;height:19px;background:#F2F2F2;"></div>
<div class="r" style="left:577px;top:465px;width:73px;height:19px;background:#F2F2F2;"></div>
<div class="r" style="left:651px;top:465px;width:107px;height:19px;background:#F2F2F2;"></div>
<div class="r" style="left:759px;top:465px;width:56px;height:19px;background:#F2F2F2;"></div>
<div class="r" style="left:816px;top:465px;width:84px;height:19px;background:#F2F2F2;"></div>
<div class="r" style="left:27px;top:505px;width:232px;height:19px;background:#F2F2F2;"></div>
<div class="r" style="left:260px;top:505px;width:81px;height:19px;background:#F2F2F2;"></div>
<div class="r" style="left:342px;top:505px;width:80px;height:19px;background:#F2F2F2;"></div>
<div class="r" style="left:423px;top:505px;width:71px;height:19px;background:#F2F2F2;"></div>
<div class="r" style="left:495px;top:505px;width:81px;height:19px;background:#F2F2F2;"></div>
<div class="r" style="left:577px;top:505px;width:73px;height:19px;background:#F2F2F2;"></div>
<div class="r" style="left:651px;top:505px;width:107px;height:19px;background:#F2F2F2;"></div>
<div class="r" style="left:759px;top:505px;width:56px;height:19px;background:#F2F2F2;"></div>
<div class="r" style="left:816px;top:505px;width:84px;height:19px;background:#F2F2F2;"></div>
<div class="r" style="left:27px;top:545px;width:232px;height:19px;background:#F2F2F2;"></div>
<div class="r" style="left:260px;top:545px;width:81px;height:19px;background:#F2F2F2;"></div>
<div class="r" style="left:342px;top:545px;width:80px;height:19px;background:#F2F2F2;"></div>
<div class="r" style="left:423px;top:545px;width:71px;height:19px;background:#F2F2F2;"></div>
<div class="r" style="left:495px;top:545px;width:81px;height:19px;background:#F2F2F2;"></div>
<div class="r" style="left:577px;top:545px;width:73px;height:19px;background:#F2F2F2;"></div>
<div class="r" style="left:651px;top:545px;width:107px;height:19px;background:#F2F2F2;"></div>
<div class="r" style="left:759px;top:545px;width:56px;height:19px;background:#F2F2F2;"></div>
<div class="r" style="left:816px;top:545px;width:84px;height:19px;background:#F2F2F2;"></div>
<div class="r" style="left:27px;top:585px;width:232px;height:19px;background:#F2F2F2;"></div>
<div class="r" style="left:260px;top:585px;width:81px;height:19px;background:#F2F2F2;"></div>
<div class="r" style="left:342px;top:585px;width:80px;height:19px;background:#F2F2F2;"></div>
<div class="r" style="left:423px;top:585px;width:71px;height:19px;background:#F2F2F2;"></div>
<div class="r" style="left:495px;top:585px;width:81px;height:19px;background:#F2F2F2;"></div>
<div class="r" style="left:577px;top:585px;width:73px;height:19px;background:#F2F2F2;"></div>
<div class="r" style="left:651px;top:585px;width:107px;height:19px;background:#F2F2F2;"></div>
<div class="r" style="left:759px;top:585px;width:56px;height:19px;background:#F2F2F2;"></div>
<div class="r" style="left:816px;top:585px;width:84px;height:19px;background:#F2F2F2;"></div>
<div class="r" style="left:27px;top:625px;width:232px;height:19px;background:#F2F2F2;"></div>
<div class="r" style="left:260px;top:625px;width:81px;height:19px;background:#F2F2F2;"></div>
<div class="r" style="left:342px;top:625px;width:80px;height:19px;background:#F2F2F2;"></div>
<div class="r" style="left:423px;top:625px;width:71px;height:19px;background:#F2F2F2;"></div>
<div class="r" style="left:495px;top:625px;width:81px;height:19px;background:#F2F2F2;"></div>
<div class="r" style="left:577px;top:625px;width:73px;height:19px;background:#F2F2F2;"></div>
<div class="r" style="left:651px;top:625px;width:107px;height:19px;background:#F2F2F2;"></div>
<div class="r" style="left:759px;top:625px;width:56px;height:19px;background:#F2F2F2;"></div>
<div class="r" style="left:816px;top:625px;width:84px;height:19px;background:#F2F2F2;"></div>
<div class="r" style="left:27px;top:665px;width:232px;height:19px;background:#F2F2F2;"></div>
<div class="r" style="left:260px;top:665px;width:81px;height:19px;background:#F2F2F2;"></div>
<div class="r" style="left:342px;top:665px;width:80px;height:19px;background:#F2F2F2;"></div>
<div class="r" style="left:423px;top:665px;width:71px;height:19px;background:#F2F2F2;"></div>
<div class="r" style="left:495px;top:665px;width:81px;height:19px;background:#F2F2F2;"></div>
<div class="r" style="left:577px;top:665px;width:73px;height:19px;background:#F2F2F2;"></div>
<div class="r" style="left:651px;top:665px;width:107px;height:19px;background:#F2F2F2;"></div>
<div class="r" style="left:759px;top:665px;width:56px;height:19px;background:#F2F2F2;"></div>
<div class="r" style="left:816px;top:665px;width:84px;height:19px;background:#F2F2F2;"></div>
<div class="r" style="left:27px;top:705px;width:232px;height:19px;background:#F2F2F2;"></div>
<div class="r" style="left:260px;top:705px;width:81px;height:19px;background:#F2F2F2;"></div>
<div class="r" style="left:342px;top:705px;width:80px;height:19px;background:#F2F2F2;"></div>
<div class="r" style="left:423px;top:705px;width:71px;height:19px;background:#F2F2F2;"></div>
<div class="r" style="left:495px;top:705px;width:81px;height:19px;background:#F2F2F2;"></div>
<div class="r" style="left:577px;top:705px;width:73px;height:19px;background:#F2F2F2;"></div>
<div class="r" style="left:651px;top:705px;width:107px;height:19px;background:#F2F2F2;"></div>
<div class="r" style="left:759px;top:705px;width:56px;height:19px;background:#F2F2F2;"></div>
<div class="r" style="left:816px;top:705px;width:84px;height:19px;background:#F2F2F2;"></div>
<div class="r" style="left:27px;top:745px;width:232px;height:19px;background:#F2F2F2;"></div>
<div class="r" style="left:260px;top:745px;width:81px;height:19px;background:#F2F2F2;"></div>
<div class="r" style="left:342px;top:745px;width:80px;height:19px;background:#F2F2F2;"></div>
<div class="r" style="left:423px;top:745px;width:71px;height:19px;background:#F2F2F2;"></div>
<div class="r" style="left:495px;top:745px;width:81px;height:19px;background:#F2F2F2;"></div>
<div class="r" style="left:577px;top:745px;width:73px;height:19px;background:#F2F2F2;"></div>
<div class="r" style="left:651px;top:745px;width:107px;height:19px;background:#F2F2F2;"></div>
<div class="r" style="left:759px;top:745px;width:56px;height:19px;background:#F2F2F2;"></div>
<div class="r" style="left:816px;top:745px;width:84px;height:19px;background:#F2F2F2;"></div>
<div class="r" style="left:27px;top:785px;width:232px;height:19px;background:#F2F2F2;"></div>
<div class="r" style="left:260px;top:785px;width:81px;height:19px;background:#F2F2F2;"></div>
<div class="r" style="left:342px;top:785px;width:80px;height:19px;background:#F2F2F2;"></div>
<div class="r" style="left:423px;top:785px;width:71px;height:19px;background:#F2F2F2;"></div>
<div class="r" style="left:495px;top:785px;width:81px;height:19px;background:#F2F2F2;"></div>
<div class="r" style="left:577px;top:785px;width:73px;height:19px;background:#F2F2F2;"></div>
<div class="r" style="left:651px;top:785px;width:107px;height:19px;background:#F2F2F2;"></div>
<div class="r" style="left:759px;top:785px;width:56px;height:19px;background:#F2F2F2;"></div>
<div class="r" style="left:816px;top:785px;width:84px;height:19px;background:#F2F2F2;"></div>
<div class="r" style="left:27px;top:825px;width:232px;height:19px;background:#F2F2F2;"></div>
<div class="r" style="left:260px;top:825px;width:81px;height:19px;background:#F2F2F2;"></div>
<div class="r" style="left:342px;top:825px;width:80px;height:19px;background:#F2F2F2;"></div>
<div class="r" style="left:423px;top:825px;width:71px;height:19px;background:#F2F2F2;"></div>
<div class="r" style="left:495px;top:825px;width:81px;height:19px;background:#F2F2F2;"></div>
<div class="r" style="left:577px;top:825px;width:73px;height:19px;background:#F2F2F2;"></div>
<div class="r" style="left:651px;top:825px;width:107px;height:19px;background:#F2F2F2;"></div>
<div class="r" style="left:759px;top:825px;width:56px;height:19px;background:#F2F2F2;"></div>
<div class="r" style="left:816px;top:825px;width:84px;height:19px;background:#F2F2F2;"></div>
<div class="r" style="left:259px;top:205px;width:1px;height:19px;background:#C6C6C6;"></div>
<div class="r" style="left:259px;top:225px;width:1px;height:620px;background:#D4D4D4;"></div>
<div class="r" style="left:341px;top:205px;width:1px;height:19px;background:#C6C6C6;"></div>
<div class="r" style="left:341px;top:225px;width:1px;height:620px;background:#D4D4D4;"></div>
<div class="r" style="left:422px;top:205px;width:1px;height:19px;background:#C6C6C6;"></div>
<div class="r" style="left:422px;top:225px;width:1px;height:620px;background:#D4D4D4;"></div>
<div class="r" style="left:494px;top:205px;width:1px;height:19px;background:#C6C6C6;"></div>
<div class="r" style="left:494px;top:225px;width:1px;height:620px;background:#D4D4D4;"></div>
<div class="r" style="left:576px;top:205px;width:1px;height:19px;background:#C6C6C6;"></div>
<div class="r" style="left:576px;top:225px;width:1px;height:620px;background:#D4D4D4;"></div>
<div class="r" style="left:650px;top:205px;width:1px;height:19px;background:#C6C6C6;"></div>
<div class="r" style="left:650px;top:225px;width:1px;height:620px;background:#D4D4D4;"></div>
<div class="r" style="left:758px;top:205px;width:1px;height:19px;background:#C6C6C6;"></div>
<div class="r" style="left:758px;top:225px;width:1px;height:620px;background:#D4D4D4;"></div>
<div class="r" style="left:815px;top:205px;width:1px;height:19px;background:#C6C6C6;"></div>
<div class="r" style="left:815px;top:225px;width:1px;height:620px;background:#D4D4D4;"></div>
<div class="r" style="left:900px;top:205px;width:1px;height:19px;background:#C6C6C6;"></div>
<div class="r" style="left:900px;top:225px;width:1px;height:620px;background:#D4D4D4;"></div>
<div class="r" style="left:964px;top:205px;width:1px;height:19px;background:#C6C6C6;"></div>
<div class="r" style="left:964px;top:225px;width:1px;height:620px;background:#D4D4D4;"></div>
<div class="r" style="left:1028px;top:205px;width:1px;height:19px;background:#C6C6C6;"></div>
<div class="r" style="left:1028px;top:225px;width:1px;height:620px;background:#D4D4D4;"></div>
<div class="r" style="left:1092px;top:205px;width:1px;height:19px;background:#C6C6C6;"></div>
<div class="r" style="left:1092px;top:225px;width:1px;height:620px;background:#D4D4D4;"></div>
<div class="r" style="left:1156px;top:205px;width:1px;height:19px;background:#C6C6C6;"></div>
<div class="r" style="left:1156px;top:225px;width:1px;height:620px;background:#D4D4D4;"></div>
<div class="r" style="left:1220px;top:205px;width:1px;height:19px;background:#C6C6C6;"></div>
<div class="r" style="left:1220px;top:225px;width:1px;height:620px;background:#D4D4D4;"></div>
<div class="r" style="left:26px;top:205px;width:1px;height:640px;background:#ABABAB;"></div>
<div class="r" style="left:27px;top:224px;width:1239px;height:1px;background:#D4D4D4;"></div>
<div class="r" style="left:27px;top:244px;width:1239px;height:1px;background:#D4D4D4;"></div>
<div class="r" style="left:1px;top:244px;width:25px;height:1px;background:#C6C6C6;"></div>
<div class="r" style="left:27px;top:264px;width:1239px;height:1px;background:#D4D4D4;"></div>
<div class="r" style="left:1px;top:264px;width:25px;height:1px;background:#C6C6C6;"></div>
<div class="r" style="left:27px;top:284px;width:1239px;height:1px;background:#D4D4D4;"></div>
<div class="r" style="left:1px;top:284px;width:25px;height:1px;background:#C6C6C6;"></div>
<div class="r" style="left:27px;top:304px;width:1239px;height:1px;background:#D4D4D4;"></div>
<div class="r" style="left:1px;top:304px;width:25px;height:1px;background:#C6C6C6;"></div>
<div class="r" style="left:27px;top:324px;width:1239px;height:1px;background:#D4D4D4;"></div>
<div class="r" style="left:1px;top:324px;width:25px;height:1px;background:#C6C6C6;"></div>
<div class="r" style="left:27px;top:344px;width:1239px;height:1px;background:#D4D4D4;"></div>
<div class="r" style="left:1px;top:344px;width:25px;height:1px;background:#C6C6C6;"></div>
<div class="r" style="left:27px;top:364px;width:1239px;height:1px;background:#D4D4D4;"></div>
<div class="r" style="left:1px;top:364px;width:25px;height:1px;background:#C6C6C6;"></div>
<div class="r" style="left:27px;top:384px;width:1239px;height:1px;background:#D4D4D4;"></div>
<div class="r" style="left:1px;top:384px;width:25px;height:1px;background:#C6C6C6;"></div>
<div class="r" style="left:27px;top:404px;width:1239px;height:1px;background:#D4D4D4;"></div>
<div class="r" style="left:1px;top:404px;width:25px;height:1px;background:#C6C6C6;"></div>
<div class="r" style="left:27px;top:424px;width:1239px;height:1px;background:#D4D4D4;"></div>
<div class="r" style="left:1px;top:424px;width:25px;height:1px;background:#C6C6C6;"></div>
<div class="r" style="left:27px;top:444px;width:1239px;height:1px;background:#D4D4D4;"></div>
<div class="r" style="left:1px;top:444px;width:25px;height:1px;background:#C6C6C6;"></div>
<div class="r" style="left:27px;top:464px;width:1239px;height:1px;background:#D4D4D4;"></div>
<div class="r" style="left:1px;top:464px;width:25px;height:1px;background:#C6C6C6;"></div>
<div class="r" style="left:27px;top:484px;width:1239px;height:1px;background:#D4D4D4;"></div>
<div class="r" style="left:1px;top:484px;width:25px;height:1px;background:#C6C6C6;"></div>
<div class="r" style="left:27px;top:504px;width:1239px;height:1px;background:#D4D4D4;"></div>
<div class="r" style="left:1px;top:504px;width:25px;height:1px;background:#C6C6C6;"></div>
<div class="r" style="left:27px;top:524px;width:1239px;height:1px;background:#D4D4D4;"></div>
<div class="r" style="left:1px;top:524px;width:25px;height:1px;background:#C6C6C6;"></div>
<div class="r" style="left:27px;top:544px;width:1239px;height:1px;background:#D4D4D4;"></div>
<div class="r" style="left:1px;top:544px;width:25px;height:1px;background:#C6C6C6;"></div>
<div class="r" style="left:27px;top:564px;width:1239px;height:1px;background:#D4D4D4;"></div>
<div class="r" style="left:1px;top:564px;width:25px;height:1px;background:#C6C6C6;"></div>
<div class="r" style="left:27px;top:584px;width:1239px;height:1px;background:#D4D4D4;"></div>
<div class="r" style="left:1px;top:584px;width:25px;height:1px;background:#C6C6C6;"></div>
<div class="r" style="left:27px;top:604px;width:1239px;height:1px;background:#D4D4D4;"></div>
<div class="r" style="left:1px;top:604px;width:25px;height:1px;background:#C6C6C6;"></div>
<div class="r" style="left:27px;top:624px;width:1239px;height:1px;background:#D4D4D4;"></div>
<div class="r" style="left:1px;top:624px;width:25px;height:1px;background:#C6C6C6;"></div>
<div class="r" style="left:27px;top:644px;width:1239px;height:1px;background:#D4D4D4;"></div>
<div class="r" style="left:1px;top:644px;width:25px;height:1px;background:#C6C6C6;"></div>
<div class="r" style="left:27px;top:664px;width:1239px;height:1px;background:#D4D4D4;"></div>
<div class="r" style="left:1px;top:664px;width:25px;height:1px;background:#C6C6C6;"></div>
<div class="r" style="left:27px;top:684px;width:1239px;height:1px;background:#D4D4D4;"></div>
<div class="r" style="left:1px;top:684px;width:25px;height:1px;background:#C6C6C6;"></div>
<div class="r" style="left:27px;top:704px;width:1239px;height:1px;background:#D4D4D4;"></div>
<div class="r" style="left:1px;top:704px;width:25px;height:1px;background:#C6C6C6;"></div>
<div class="r" style="left:27px;top:724px;width:1239px;height:1px;background:#D4D4D4;"></div>
<div class="r" style="left:1px;top:724px;width:25px;height:1px;background:#C6C6C6;"></div>
<div class="r" style="left:27px;top:744px;width:1239px;height:1px;background:#D4D4D4;"></div>
<div class="r" style="left:1px;top:744px;width:25px;height:1px;background:#C6C6C6;"></div>
<div class="r" style="left:27px;top:764px;width:1239px;height:1px;background:#D4D4D4;"></div>
<div class="r" style="left:1px;top:764px;width:25px;height:1px;background:#C6C6C6;"></div>
<div class="r" style="left:27px;top:784px;width:1239px;height:1px;background:#D4D4D4;"></div>
<div class="r" style="left:1px;top:784px;width:25px;height:1px;background:#C6C6C6;"></div>
<div class="r" style="left:27px;top:804px;width:1239px;height:1px;background:#D4D4D4;"></div>
<div class="r" style="left:1px;top:804px;width:25px;height:1px;background:#C6C6C6;"></div>
<div class="r" style="left:27px;top:824px;width:1239px;height:1px;background:#D4D4D4;"></div>
<div class="r" style="left:1px;top:824px;width:25px;height:1px;background:#C6C6C6;"></div>
<div class="r" style="left:27px;top:844px;width:1239px;height:1px;background:#D4D4D4;"></div>
<div class="r" style="left:1px;top:844px;width:25px;height:1px;background:#C6C6C6;"></div>
<div class="r" style="left:1px;top:224px;width:1265px;height:1px;background:#ABABAB;"></div>
<div class="r" style="left:26px;top:224px;width:733px;height:1px;background:#ABABAB;"></div>
<div class="r" style="left:26px;top:244px;width:733px;height:1px;background:#ABABAB;"></div>
<div class="r" style="left:26px;top:264px;width:733px;height:1px;background:#ABABAB;"></div>
<div class="r" style="left:26px;top:224px;width:1px;height:41px;background:#ABABAB;"></div>
<div class="r" style="left:259px;top:224px;width:1px;height:41px;background:#ABABAB;"></div>
<div class="r" style="left:341px;top:224px;width:1px;height:41px;background:#ABABAB;"></div>
<div class="r" style="left:422px;top:224px;width:1px;height:41px;background:#ABABAB;"></div>
<div class="r" style="left:494px;top:224px;width:1px;height:41px;background:#ABABAB;"></div>
<div class="r" style="left:576px;top:224px;width:1px;height:41px;background:#ABABAB;"></div>
<div class="r" style="left:650px;top:224px;width:1px;height:41px;background:#ABABAB;"></div>
<div class="r" style="left:758px;top:224px;width:1px;height:41px;background:#ABABAB;"></div>
<div class="r" style="left:759px;top:244px;width:57px;height:1px;background:#C0C0C0;"></div>
<div class="r" style="left:759px;top:264px;width:57px;height:1px;background:#C0C0C0;"></div>
<div class="r" style="left:759px;top:284px;width:57px;height:1px;background:#C0C0C0;"></div>
<div class="r" style="left:815px;top:225px;width:1px;height:60px;background:#C8C8C8;"></div>
<div class="r" style="left:758px;top:264px;width:1px;height:20px;background:#C0C0C0;"></div>
<div class="r" style="left:26px;top:284px;width:875px;height:1px;background:#ABABAB;"></div>
<div class="r" style="left:26px;top:304px;width:875px;height:1px;background:#ABABAB;"></div>
<div class="r" style="left:26px;top:324px;width:875px;height:1px;background:#ABABAB;"></div>
<div class="r" style="left:26px;top:344px;width:875px;height:1px;background:#ABABAB;"></div>
<div class="r" style="left:26px;top:364px;width:875px;height:1px;background:#ABABAB;"></div>
<div class="r" style="left:26px;top:384px;width:875px;height:1px;background:#ABABAB;"></div>
<div class="r" style="left:26px;top:404px;width:875px;height:1px;background:#ABABAB;"></div>
<div class="r" style="left:26px;top:424px;width:875px;height:1px;background:#ABABAB;"></div>
<div class="r" style="left:26px;top:444px;width:875px;height:1px;background:#ABABAB;"></div>
<div class="r" style="left:26px;top:464px;width:875px;height:1px;background:#ABABAB;"></div>
<div class="r" style="left:26px;top:484px;width:875px;height:1px;background:#ABABAB;"></div>
<div class="r" style="left:26px;top:504px;width:875px;height:1px;background:#ABABAB;"></div>
<div class="r" style="left:26px;top:524px;width:875px;height:1px;background:#ABABAB;"></div>
<div class="r" style="left:26px;top:544px;width:875px;height:1px;background:#ABABAB;"></div>
<div class="r" style="left:26px;top:564px;width:875px;height:1px;background:#ABABAB;"></div>
<div class="r" style="left:26px;top:584px;width:875px;height:1px;background:#ABABAB;"></div>
<div class="r" style="left:26px;top:604px;width:875px;height:1px;background:#ABABAB;"></div>
<div class="r" style="left:26px;top:624px;width:875px;height:1px;background:#ABABAB;"></div>
<div class="r" style="left:26px;top:644px;width:875px;height:1px;background:#ABABAB;"></div>
<div class="r" style="left:26px;top:664px;width:875px;height:1px;background:#ABABAB;"></div>
<div class="r" style="left:26px;top:684px;width:875px;height:1px;background:#ABABAB;"></div>
<div class="r" style="left:26px;top:704px;width:875px;height:1px;background:#ABABAB;"></div>
<div class="r" style="left:26px;top:724px;width:875px;height:1px;background:#ABABAB;"></div>
<div class="r" style="left:26px;top:744px;width:875px;height:1px;background:#ABABAB;"></div>
<div class="r" style="left:26px;top:764px;width:875px;height:1px;background:#ABABAB;"></div>
<div class="r" style="left:26px;top:784px;width:875px;height:1px;background:#ABABAB;"></div>
<div class="r" style="left:26px;top:804px;width:875px;height:1px;background:#ABABAB;"></div>
<div class="r" style="left:26px;top:824px;width:875px;height:1px;background:#ABABAB;"></div>
<div class="r" style="left:26px;top:844px;width:875px;height:1px;background:#ABABAB;"></div>
<div class="r" style="left:26px;top:284px;width:1px;height:561px;background:#ABABAB;"></div>
<div class="r" style="left:259px;top:284px;width:1px;height:561px;background:#ABABAB;"></div>
<div class="r" style="left:341px;top:284px;width:1px;height:561px;background:#ABABAB;"></div>
<div class="r" style="left:422px;top:284px;width:1px;height:561px;background:#ABABAB;"></div>
<div class="r" style="left:494px;top:284px;width:1px;height:561px;background:#ABABAB;"></div>
<div class="r" style="left:576px;top:284px;width:1px;height:561px;background:#ABABAB;"></div>
<div class="r" style="left:650px;top:284px;width:1px;height:561px;background:#ABABAB;"></div>
<div class="r" style="left:758px;top:284px;width:1px;height:561px;background:#ABABAB;"></div>
<div class="r" style="left:815px;top:284px;width:1px;height:561px;background:#ABABAB;"></div>
<div class="r" style="left:900px;top:284px;width:1px;height:561px;background:#ABABAB;"></div>
<div class="r" style="left:1266px;top:224px;width:1px;height:621px;background:#ABABAB;"></div>
<div class="r" style="left:1px;top:844px;width:1266px;height:1px;background:#ABABAB;"></div>
<div class="c" style="left:27px;top:225px;width:232px;text-align:left;font-weight:700;-webkit-text-stroke:0">Alignment/Profile Name</div>
<div class="c" style="left:260px;top:225px;width:81px;text-align:left;font-weight:700;-webkit-text-stroke:0">Type</div>
<div class="c" style="left:342px;top:225px;width:80px;text-align:left;font-weight:700;-webkit-text-stroke:0">Object Style</div>
<div class="c" style="left:423px;top:225px;width:71px;text-align:left;font-weight:700;-webkit-text-stroke:0">Site</div>
<div class="c" style="left:495px;top:225px;width:81px;text-align:left;font-weight:700;-webkit-text-stroke:0">Start Station</div>
<div class="c" style="left:577px;top:225px;width:73px;text-align:left;font-weight:700;-webkit-text-stroke:0">End Station</div>
<div class="c" style="left:651px;top:225px;width:107px;text-align:right;font-weight:700;-webkit-text-stroke:0">Length</div>
<div class="c" style="left:27px;top:245px;width:232px;text-align:left;font-weight:400">Finished Grade Centerline -Second Street</div>
<div class="c" style="left:260px;top:245px;width:81px;text-align:left;font-weight:400">Layout Profile</div>
<div class="c" style="left:342px;top:245px;width:80px;text-align:left;font-weight:400">Design Profile</div>
<div class="c" style="left:423px;top:245px;width:71px;text-align:left;font-weight:400">&lt;None&gt;</div>
<div class="c" style="left:495px;top:245px;width:81px;text-align:right;font-weight:400">-<i class="x">0</i>+<i class="x">0</i><i class="d">4</i><i class="d">9</i>.<i class="x">1</i><i class="d">9</i></div>
<div class="c" style="left:577px;top:245px;width:73px;text-align:right;font-weight:400"><i class="x">0</i>+8<i class="d">5</i><i class="d">9</i>.<i class="d">3</i><i class="x">1</i></div>
<svg class="r" style="left:651px;top:245px;" width="6" height="6" viewBox="0 0 6 6"><path d="M0 0H5.5L0 5.5Z" fill="#008000"/></svg>
<div class="c" style="left:651px;top:245px;width:107px;text-align:right;font-weight:400"><i class="d">9</i><i class="x">0</i>8.<i class="d">5</i><i class="x">0</i><i class="x">0</i>6</div>
<div class="c" style="left:27px;top:285px;width:232px;text-align:left;font-weight:700;-webkit-text-stroke:0">Point</div>
<div class="c" style="left:260px;top:285px;width:81px;text-align:right;font-weight:700;-webkit-text-stroke:0">Station</div>
<div class="c" style="left:342px;top:285px;width:80px;text-align:right;font-weight:700;-webkit-text-stroke:0">Easting</div>
<div class="c" style="left:423px;top:285px;width:71px;text-align:right;font-weight:700;-webkit-text-stroke:0">Northing</div>
<div class="c" style="left:495px;top:285px;width:81px;text-align:right;font-weight:700;-webkit-text-stroke:0">Elevation</div>
<div class="c" style="left:577px;top:285px;width:73px;text-align:right;font-weight:700;-webkit-text-stroke:0">Bearing</div>
<div class="c" style="left:651px;top:285px;width:107px;text-align:center;font-weight:700;-webkit-text-stroke:0">Alignment Radius</div>
<div class="c" style="left:759px;top:285px;width:56px;text-align:center;font-weight:700;-webkit-text-stroke:0">Gradient</div>
<div class="c" style="left:816px;top:285px;width:84px;text-align:center;font-weight:700;-webkit-text-stroke:0">Profile Radius</div>
<svg class="r" style="left:27px;top:305px;" width="6" height="6" viewBox="0 0 6 6"><path d="M0 0H5.5L0 5.5Z" fill="#008000"/></svg>
<div class="c" style="left:27px;top:305px;width:232px;text-align:left;font-weight:400"><i class="x">1</i></div>
<div class="c" style="left:260px;top:305px;width:81px;text-align:right;font-weight:400">-<i class="x">0</i>+<i class="x">0</i><i class="d">4</i><i class="d">9</i>.<i class="x">1</i><i class="d">9</i></div>
<svg class="r" style="left:342px;top:305px;" width="6" height="6" viewBox="0 0 6 6"><path d="M0 0H5.5L0 5.5Z" fill="#008000"/></svg>
<div class="c" style="left:342px;top:305px;width:80px;text-align:right;font-weight:400"><i class="d">3</i><i class="x">1</i><i class="x">2</i><i class="d">3</i><i class="x">1</i><i class="d">3</i>.<i class="d">9</i><i class="x">2</i><i class="x">2</i><i class="d">7</i></div>
<svg class="r" style="left:423px;top:305px;" width="6" height="6" viewBox="0 0 6 6"><path d="M0 0H5.5L0 5.5Z" fill="#008000"/></svg>
<div class="c" style="left:423px;top:305px;width:71px;text-align:right;font-weight:400"><i class="x">2</i><i class="d">3</i>6<i class="d">3</i><i class="d">5</i>.<i class="d">9</i><i class="d">9</i><i class="d">9</i><i class="d">5</i></div>
<svg class="r" style="left:495px;top:305px;" width="6" height="6" viewBox="0 0 6 6"><path d="M0 0H5.5L0 5.5Z" fill="#008000"/></svg>
<div class="c" style="left:495px;top:305px;width:81px;text-align:right;font-weight:400"><i class="d">4</i><i class="d">5</i>.<i class="d">7</i><i class="d">4</i><i class="d">7</i></div>
<div class="c" style="left:577px;top:305px;width:73px;text-align:right;font-weight:400"><i class="d">3</i><i class="d">3</i><i class="d">9</i><u>°</u> <i class="d">3</i><i class="d">5</i>' <i class="x">2</i><i class="x">1</i>&quot;</div>
<div class="c" style="left:651px;top:305px;width:107px;text-align:right;font-weight:400">Infinity</div>
<svg class="r" style="left:759px;top:305px;" width="6" height="6" viewBox="0 0 6 6"><path d="M0 0H5.5L0 5.5Z" fill="#008000"/></svg>
<div class="c" style="left:759px;top:305px;width:56px;text-align:center;font-weight:400"><i class="d">3</i>.<i class="x">0</i><i class="d">7</i> %</div>
<div class="c" style="left:816px;top:305px;width:84px;text-align:center;font-weight:400">Infinity</div>
<svg class="r" style="left:27px;top:325px;" width="6" height="6" viewBox="0 0 6 6"><path d="M0 0H5.5L0 5.5Z" fill="#008000"/></svg>
<div class="c" style="left:27px;top:325px;width:232px;text-align:left;font-weight:400"><i class="x">2</i></div>
<div class="c" style="left:260px;top:325px;width:81px;text-align:right;font-weight:400">-<i class="x">0</i>+<i class="x">0</i><i class="d">4</i><i class="x">0</i>.<i class="x">0</i><i class="x">0</i></div>
<svg class="r" style="left:342px;top:325px;" width="6" height="6" viewBox="0 0 6 6"><path d="M0 0H5.5L0 5.5Z" fill="#008000"/></svg>
<div class="c" style="left:342px;top:325px;width:80px;text-align:right;font-weight:400"><i class="d">3</i><i class="x">1</i><i class="x">2</i><i class="d">3</i><i class="x">1</i><i class="x">0</i>.<i class="d">7</i><i class="x">1</i>86</div>
<svg class="r" style="left:423px;top:325px;" width="6" height="6" viewBox="0 0 6 6"><path d="M0 0H5.5L0 5.5Z" fill="#008000"/></svg>
<div class="c" style="left:423px;top:325px;width:71px;text-align:right;font-weight:400"><i class="x">2</i><i class="d">3</i>6<i class="d">4</i><i class="d">4</i>.6<i class="x">1</i><i class="x">0</i><i class="d">3</i></div>
<svg class="r" style="left:495px;top:325px;" width="6" height="6" viewBox="0 0 6 6"><path d="M0 0H5.5L0 5.5Z" fill="#008000"/></svg>
<div class="c" style="left:495px;top:325px;width:81px;text-align:right;font-weight:400"><i class="d">4</i>6.<i class="x">0</i><i class="x">2</i>8</div>
<div class="c" style="left:577px;top:325px;width:73px;text-align:right;font-weight:400"><i class="d">3</i><i class="d">3</i><i class="d">9</i><u>°</u> <i class="d">3</i><i class="d">5</i>' <i class="x">2</i><i class="x">1</i>&quot;</div>
<div class="c" style="left:651px;top:325px;width:107px;text-align:right;font-weight:400">Infinity</div>
<svg class="r" style="left:759px;top:325px;" width="6" height="6" viewBox="0 0 6 6"><path d="M0 0H5.5L0 5.5Z" fill="#008000"/></svg>
<div class="c" style="left:759px;top:325px;width:56px;text-align:center;font-weight:400"><i class="d">3</i>.<i class="x">0</i><i class="d">7</i> %</div>
<div class="c" style="left:816px;top:325px;width:84px;text-align:center;font-weight:400">Infinity</div>
<svg class="r" style="left:27px;top:345px;" width="6" height="6" viewBox="0 0 6 6"><path d="M0 0H5.5L0 5.5Z" fill="#008000"/></svg>
<div class="c" style="left:27px;top:345px;width:232px;text-align:left;font-weight:400"><i class="d">3</i></div>
<div class="c" style="left:260px;top:345px;width:81px;text-align:right;font-weight:400">-<i class="x">0</i>+<i class="x">0</i><i class="d">3</i><i class="x">0</i>.<i class="x">0</i><i class="x">0</i></div>
<svg class="r" style="left:342px;top:345px;" width="6" height="6" viewBox="0 0 6 6"><path d="M0 0H5.5L0 5.5Z" fill="#008000"/></svg>
<div class="c" style="left:342px;top:345px;width:80px;text-align:right;font-weight:400"><i class="d">3</i><i class="x">1</i><i class="x">2</i><i class="d">3</i><i class="x">0</i><i class="d">7</i>.<i class="x">2</i><i class="d">3</i><i class="x">1</i><i class="x">1</i></div>
<svg class="r" style="left:423px;top:345px;" width="6" height="6" viewBox="0 0 6 6"><path d="M0 0H5.5L0 5.5Z" fill="#008000"/></svg>
<div class="c" style="left:423px;top:345px;width:71px;text-align:right;font-weight:400"><i class="x">2</i><i class="d">3</i>6<i class="d">5</i><i class="d">3</i>.<i class="d">9</i>8<i class="x">2</i><i class="d">4</i></div>
<svg class="r" style="left:495px;top:345px;" width="6" height="6" viewBox="0 0 6 6"><path d="M0 0H5.5L0 5.5Z" fill="#008000"/></svg>
<div class="c" style="left:495px;top:345px;width:81px;text-align:right;font-weight:400"><i class="d">4</i>6.<i class="d">3</i><i class="d">3</i><i class="d">5</i></div>
<div class="c" style="left:577px;top:345px;width:73px;text-align:right;font-weight:400"><i class="d">3</i><i class="d">3</i><i class="d">9</i><u>°</u> <i class="d">3</i><i class="d">5</i>' <i class="x">2</i><i class="x">1</i>&quot;</div>
<div class="c" style="left:651px;top:345px;width:107px;text-align:right;font-weight:400">Infinity</div>
<svg class="r" style="left:759px;top:345px;" width="6" height="6" viewBox="0 0 6 6"><path d="M0 0H5.5L0 5.5Z" fill="#008000"/></svg>
<div class="c" style="left:759px;top:345px;width:56px;text-align:center;font-weight:400"><i class="d">3</i>.<i class="x">0</i><i class="d">7</i> %</div>
<div class="c" style="left:816px;top:345px;width:84px;text-align:center;font-weight:400">Infinity</div>
<svg class="r" style="left:27px;top:365px;" width="6" height="6" viewBox="0 0 6 6"><path d="M0 0H5.5L0 5.5Z" fill="#008000"/></svg>
<div class="c" style="left:27px;top:365px;width:232px;text-align:left;font-weight:400"><i class="d">4</i></div>
<div class="c" style="left:260px;top:365px;width:81px;text-align:right;font-weight:400">-<i class="x">0</i>+<i class="x">0</i><i class="x">2</i><i class="x">0</i>.<i class="x">0</i><i class="x">0</i></div>
<svg class="r" style="left:342px;top:365px;" width="6" height="6" viewBox="0 0 6 6"><path d="M0 0H5.5L0 5.5Z" fill="#008000"/></svg>
<div class="c" style="left:342px;top:365px;width:80px;text-align:right;font-weight:400"><i class="d">3</i><i class="x">1</i><i class="x">2</i><i class="d">3</i><i class="x">0</i><i class="d">3</i>.<i class="d">7</i><i class="d">4</i><i class="d">3</i><i class="d">7</i></div>
<svg class="r" style="left:423px;top:365px;" width="6" height="6" viewBox="0 0 6 6"><path d="M0 0H5.5L0 5.5Z" fill="#008000"/></svg>
<div class="c" style="left:423px;top:365px;width:71px;text-align:right;font-weight:400"><i class="x">2</i><i class="d">3</i>66<i class="d">3</i>.<i class="d">3</i><i class="d">5</i><i class="d">4</i>6</div>
<svg class="r" style="left:495px;top:365px;" width="6" height="6" viewBox="0 0 6 6"><path d="M0 0H5.5L0 5.5Z" fill="#008000"/></svg>
<div class="c" style="left:495px;top:365px;width:81px;text-align:right;font-weight:400"><i class="d">4</i>6.6<i class="d">4</i><i class="x">1</i></div>
<div class="c" style="left:577px;top:365px;width:73px;text-align:right;font-weight:400"><i class="d">3</i><i class="d">3</i><i class="d">9</i><u>°</u> <i class="d">3</i><i class="d">5</i>' <i class="x">2</i><i class="x">1</i>&quot;</div>
<div class="c" style="left:651px;top:365px;width:107px;text-align:right;font-weight:400">Infinity</div>
<svg class="r" style="left:759px;top:365px;" width="6" height="6" viewBox="0 0 6 6"><path d="M0 0H5.5L0 5.5Z" fill="#008000"/></svg>
<div class="c" style="left:759px;top:365px;width:56px;text-align:center;font-weight:400"><i class="d">3</i>.<i class="x">0</i><i class="d">7</i> %</div>
<div class="c" style="left:816px;top:365px;width:84px;text-align:center;font-weight:400">Infinity</div>
<svg class="r" style="left:27px;top:385px;" width="6" height="6" viewBox="0 0 6 6"><path d="M0 0H5.5L0 5.5Z" fill="#008000"/></svg>
<div class="c" style="left:27px;top:385px;width:232px;text-align:left;font-weight:400"><i class="d">5</i></div>
<div class="c" style="left:260px;top:385px;width:81px;text-align:right;font-weight:400">-<i class="x">0</i>+<i class="x">0</i><i class="x">1</i><i class="x">0</i>.<i class="x">0</i><i class="x">0</i></div>
<svg class="r" style="left:342px;top:385px;" width="6" height="6" viewBox="0 0 6 6"><path d="M0 0H5.5L0 5.5Z" fill="#008000"/></svg>
<div class="c" style="left:342px;top:385px;width:80px;text-align:right;font-weight:400"><i class="d">3</i><i class="x">1</i><i class="x">2</i><i class="d">3</i><i class="x">0</i><i class="x">0</i>.<i class="x">2</i><i class="d">5</i>6<i class="x">2</i></div>
<svg class="r" style="left:423px;top:385px;" width="6" height="6" viewBox="0 0 6 6"><path d="M0 0H5.5L0 5.5Z" fill="#008000"/></svg>
<div class="c" style="left:423px;top:385px;width:71px;text-align:right;font-weight:400"><i class="x">2</i><i class="d">3</i>6<i class="d">7</i><i class="x">2</i>.<i class="d">7</i><i class="x">2</i>68</div>
<svg class="r" style="left:495px;top:385px;" width="6" height="6" viewBox="0 0 6 6"><path d="M0 0H5.5L0 5.5Z" fill="#008000"/></svg>
<div class="c" style="left:495px;top:385px;width:81px;text-align:right;font-weight:400"><i class="d">4</i>6.<i class="d">9</i><i class="d">4</i>8</div>
<div class="c" style="left:577px;top:385px;width:73px;text-align:right;font-weight:400"><i class="d">3</i><i class="d">3</i><i class="d">9</i><u>°</u> <i class="d">3</i><i class="d">5</i>' <i class="x">2</i><i class="x">1</i>&quot;</div>
<div class="c" style="left:651px;top:385px;width:107px;text-align:right;font-weight:400">Infinity</div>
<svg class="r" style="left:759px;top:385px;" width="6" height="6" viewBox="0 0 6 6"><path d="M0 0H5.5L0 5.5Z" fill="#008000"/></svg>
<div class="c" style="left:759px;top:385px;width:56px;text-align:center;font-weight:400"><i class="d">3</i>.<i class="x">0</i><i class="d">7</i> %</div>
<div class="c" style="left:816px;top:385px;width:84px;text-align:center;font-weight:400">Infinity</div>
<svg class="r" style="left:27px;top:405px;" width="6" height="6" viewBox="0 0 6 6"><path d="M0 0H5.5L0 5.5Z" fill="#008000"/></svg>
<div class="c" style="left:27px;top:405px;width:232px;text-align:left;font-weight:400">6</div>
<div class="c" style="left:260px;top:405px;width:81px;text-align:right;font-weight:400">-<i class="x">0</i>+<i class="x">0</i><i class="x">0</i><i class="x">0</i>.6<i class="d">4</i></div>
<svg class="r" style="left:342px;top:405px;" width="6" height="6" viewBox="0 0 6 6"><path d="M0 0H5.5L0 5.5Z" fill="#008000"/></svg>
<div class="c" style="left:342px;top:405px;width:80px;text-align:right;font-weight:400"><i class="d">3</i><i class="x">1</i><i class="x">2</i><i class="x">2</i><i class="d">9</i>6.<i class="d">9</i><i class="d">9</i><i class="d">3</i><i class="d">4</i></div>
<svg class="r" style="left:423px;top:405px;" width="6" height="6" viewBox="0 0 6 6"><path d="M0 0H5.5L0 5.5Z" fill="#008000"/></svg>
<div class="c" style="left:423px;top:405px;width:71px;text-align:right;font-weight:400"><i class="x">2</i><i class="d">3</i>68<i class="x">1</i>.<i class="d">4</i><i class="d">9</i><i class="d">5</i><i class="d">3</i></div>
<svg class="r" style="left:495px;top:405px;" width="6" height="6" viewBox="0 0 6 6"><path d="M0 0H5.5L0 5.5Z" fill="#008000"/></svg>
<div class="c" style="left:495px;top:405px;width:81px;text-align:right;font-weight:400"><i class="d">4</i><i class="d">7</i>.<i class="x">2</i><i class="d">3</i><i class="d">5</i></div>
<div class="c" style="left:577px;top:405px;width:73px;text-align:right;font-weight:400"><i class="d">3</i><i class="d">3</i><i class="d">9</i><u>°</u> <i class="d">3</i><i class="d">5</i>' <i class="x">2</i><i class="x">1</i>&quot;</div>
<div class="c" style="left:651px;top:405px;width:107px;text-align:right;font-weight:400">Infinity</div>
<svg class="r" style="left:759px;top:405px;" width="6" height="6" viewBox="0 0 6 6"><path d="M0 0H5.5L0 5.5Z" fill="#008000"/></svg>
<div class="c" style="left:759px;top:405px;width:56px;text-align:center;font-weight:400"><i class="d">3</i>.<i class="x">0</i><i class="d">7</i> %</div>
<svg class="r" style="left:816px;top:405px;" width="6" height="6" viewBox="0 0 6 6"><path d="M0 0H5.5L0 5.5Z" fill="#008000"/></svg>
<div class="c" style="left:816px;top:405px;width:84px;text-align:center;font-weight:400"><i class="x">2</i><i class="d">4</i><i class="d">3</i>.<i class="x">1</i><i class="d">4</i><i class="x">2</i><i class="d">3</i></div>
<svg class="r" style="left:27px;top:425px;" width="6" height="6" viewBox="0 0 6 6"><path d="M0 0H5.5L0 5.5Z" fill="#008000"/></svg>
<div class="c" style="left:27px;top:425px;width:232px;text-align:left;font-weight:400"><i class="d">7</i></div>
<div class="c" style="left:260px;top:425px;width:81px;text-align:right;font-weight:400">-<i class="x">0</i>+<i class="x">0</i><i class="x">0</i><i class="x">0</i>.<i class="x">0</i><i class="x">0</i></div>
<svg class="r" style="left:342px;top:425px;" width="6" height="6" viewBox="0 0 6 6"><path d="M0 0H5.5L0 5.5Z" fill="#008000"/></svg>
<div class="c" style="left:342px;top:425px;width:80px;text-align:right;font-weight:400"><i class="d">3</i><i class="x">1</i><i class="x">2</i><i class="x">2</i><i class="d">9</i>6.<i class="d">7</i>68<i class="d">7</i></div>
<svg class="r" style="left:423px;top:425px;" width="6" height="6" viewBox="0 0 6 6"><path d="M0 0H5.5L0 5.5Z" fill="#008000"/></svg>
<div class="c" style="left:423px;top:425px;width:71px;text-align:right;font-weight:400"><i class="x">2</i><i class="d">3</i>68<i class="x">2</i>.<i class="x">0</i><i class="d">9</i><i class="d">9</i><i class="x">0</i></div>
<svg class="r" style="left:495px;top:425px;" width="6" height="6" viewBox="0 0 6 6"><path d="M0 0H5.5L0 5.5Z" fill="#008000"/></svg>
<div class="c" style="left:495px;top:425px;width:81px;text-align:right;font-weight:400"><i class="d">4</i><i class="d">7</i>.<i class="x">2</i><i class="d">5</i><i class="d">4</i></div>
<div class="c" style="left:577px;top:425px;width:73px;text-align:right;font-weight:400"><i class="d">3</i><i class="d">3</i><i class="d">9</i><u>°</u> <i class="d">3</i><i class="d">5</i>' <i class="x">2</i><i class="x">1</i>&quot;</div>
<div class="c" style="left:651px;top:425px;width:107px;text-align:right;font-weight:400">Infinity</div>
<svg class="r" style="left:759px;top:425px;" width="6" height="6" viewBox="0 0 6 6"><path d="M0 0H5.5L0 5.5Z" fill="#008000"/></svg>
<div class="c" style="left:759px;top:425px;width:56px;text-align:center;font-weight:400"><i class="x">2</i>.8<i class="x">0</i> %</div>
<svg class="r" style="left:816px;top:425px;" width="6" height="6" viewBox="0 0 6 6"><path d="M0 0H5.5L0 5.5Z" fill="#008000"/></svg>
<div class="c" style="left:816px;top:425px;width:84px;text-align:center;font-weight:400"><i class="x">2</i><i class="d">4</i><i class="d">3</i>.<i class="x">1</i><i class="d">4</i><i class="x">2</i><i class="d">3</i></div>
<svg class="r" style="left:27px;top:445px;" width="6" height="6" viewBox="0 0 6 6"><path d="M0 0H5.5L0 5.5Z" fill="#008000"/></svg>
<div class="c" style="left:27px;top:445px;width:232px;text-align:left;font-weight:400">8</div>
<div class="c" style="left:260px;top:445px;width:81px;text-align:right;font-weight:400"><i class="x">0</i>+<i class="x">0</i><i class="x">0</i><i class="x">0</i>.<i class="x">0</i><i class="x">0</i></div>
<svg class="r" style="left:342px;top:445px;" width="6" height="6" viewBox="0 0 6 6"><path d="M0 0H5.5L0 5.5Z" fill="#008000"/></svg>
<div class="c" style="left:342px;top:445px;width:80px;text-align:right;font-weight:400"><i class="d">3</i><i class="x">1</i><i class="x">2</i><i class="x">2</i><i class="d">9</i>6.<i class="d">7</i>68<i class="d">7</i></div>
<svg class="r" style="left:423px;top:445px;" width="6" height="6" viewBox="0 0 6 6"><path d="M0 0H5.5L0 5.5Z" fill="#008000"/></svg>
<div class="c" style="left:423px;top:445px;width:71px;text-align:right;font-weight:400"><i class="x">2</i><i class="d">3</i>68<i class="x">2</i>.<i class="x">0</i><i class="d">9</i><i class="d">9</i><i class="x">0</i></div>
<svg class="r" style="left:495px;top:445px;" width="6" height="6" viewBox="0 0 6 6"><path d="M0 0H5.5L0 5.5Z" fill="#008000"/></svg>
<div class="c" style="left:495px;top:445px;width:81px;text-align:right;font-weight:400"><i class="d">4</i><i class="d">7</i>.<i class="x">2</i><i class="d">5</i><i class="d">4</i></div>
<div class="c" style="left:577px;top:445px;width:73px;text-align:right;font-weight:400"><i class="d">3</i><i class="d">3</i><i class="d">9</i><u>°</u> <i class="d">3</i><i class="d">5</i>' <i class="x">2</i><i class="x">1</i>&quot;</div>
<div class="c" style="left:651px;top:445px;width:107px;text-align:right;font-weight:400">Infinity</div>
<svg class="r" style="left:759px;top:445px;" width="6" height="6" viewBox="0 0 6 6"><path d="M0 0H5.5L0 5.5Z" fill="#008000"/></svg>
<div class="c" style="left:759px;top:445px;width:56px;text-align:center;font-weight:400"><i class="x">2</i>.8<i class="x">0</i> %</div>
<svg class="r" style="left:816px;top:445px;" width="6" height="6" viewBox="0 0 6 6"><path d="M0 0H5.5L0 5.5Z" fill="#008000"/></svg>
<div class="c" style="left:816px;top:445px;width:84px;text-align:center;font-weight:400"><i class="x">2</i><i class="d">4</i><i class="d">3</i>.<i class="x">1</i><i class="d">4</i><i class="x">2</i><i class="d">3</i></div>
<svg class="r" style="left:27px;top:465px;" width="6" height="6" viewBox="0 0 6 6"><path d="M0 0H5.5L0 5.5Z" fill="#008000"/></svg>
<div class="c" style="left:27px;top:465px;width:232px;text-align:left;font-weight:400"><i class="d">9</i></div>
<div class="c" style="left:260px;top:465px;width:81px;text-align:right;font-weight:400"><i class="x">0</i>+<i class="x">0</i><i class="x">0</i>6.8<i class="x">1</i></div>
<svg class="r" style="left:342px;top:465px;" width="6" height="6" viewBox="0 0 6 6"><path d="M0 0H5.5L0 5.5Z" fill="#008000"/></svg>
<div class="c" style="left:342px;top:465px;width:80px;text-align:right;font-weight:400"><i class="d">3</i><i class="x">1</i><i class="x">2</i><i class="x">2</i><i class="d">9</i><i class="d">4</i>.<i class="d">3</i><i class="d">9</i><i class="d">4</i><i class="x">1</i></div>
<svg class="r" style="left:423px;top:465px;" width="6" height="6" viewBox="0 0 6 6"><path d="M0 0H5.5L0 5.5Z" fill="#008000"/></svg>
<div class="c" style="left:423px;top:465px;width:71px;text-align:right;font-weight:400"><i class="x">2</i><i class="d">3</i>688.<i class="d">4</i>8<i class="x">0</i><i class="d">5</i></div>
<svg class="r" style="left:495px;top:465px;" width="6" height="6" viewBox="0 0 6 6"><path d="M0 0H5.5L0 5.5Z" fill="#008000"/></svg>
<div class="c" style="left:495px;top:465px;width:81px;text-align:right;font-weight:400"><i class="d">4</i><i class="d">7</i>.<i class="d">3</i><i class="d">4</i><i class="d">9</i></div>
<div class="c" style="left:577px;top:465px;width:73px;text-align:right;font-weight:400"><i class="d">3</i><i class="d">3</i><i class="d">9</i><u>°</u> <i class="d">3</i><i class="d">5</i>' <i class="x">1</i><i class="d">9</i>&quot;</div>
<div class="c" style="left:651px;top:465px;width:107px;text-align:right;font-weight:400">Infinity</div>
<svg class="r" style="left:759px;top:465px;" width="6" height="6" viewBox="0 0 6 6"><path d="M0 0H5.5L0 5.5Z" fill="#008000"/></svg>
<div class="c" style="left:759px;top:465px;width:56px;text-align:center;font-weight:400"><i class="x">0</i>.<i class="x">0</i><i class="x">0</i> %</div>
<svg class="r" style="left:816px;top:465px;" width="6" height="6" viewBox="0 0 6 6"><path d="M0 0H5.5L0 5.5Z" fill="#008000"/></svg>
<div class="c" style="left:816px;top:465px;width:84px;text-align:center;font-weight:400"><i class="x">2</i><i class="d">4</i><i class="d">3</i>.<i class="x">1</i><i class="d">4</i><i class="x">2</i><i class="d">3</i></div>
<svg class="r" style="left:27px;top:485px;" width="6" height="6" viewBox="0 0 6 6"><path d="M0 0H5.5L0 5.5Z" fill="#008000"/></svg>
<div class="c" style="left:27px;top:485px;width:232px;text-align:left;font-weight:400"><i class="x">1</i><i class="x">0</i></div>
<div class="c" style="left:260px;top:485px;width:81px;text-align:right;font-weight:400"><i class="x">0</i>+<i class="x">0</i><i class="x">1</i><i class="x">0</i>.<i class="x">0</i><i class="x">0</i></div>
<svg class="r" style="left:342px;top:485px;" width="6" height="6" viewBox="0 0 6 6"><path d="M0 0H5.5L0 5.5Z" fill="#008000"/></svg>
<div class="c" style="left:342px;top:485px;width:80px;text-align:right;font-weight:400"><i class="d">3</i><i class="x">1</i><i class="x">2</i><i class="x">2</i><i class="d">9</i><i class="d">3</i>.<i class="x">2</i>8<i class="x">1</i><i class="x">2</i></div>
<svg class="r" style="left:423px;top:485px;" width="6" height="6" viewBox="0 0 6 6"><path d="M0 0H5.5L0 5.5Z" fill="#008000"/></svg>
<div class="c" style="left:423px;top:485px;width:71px;text-align:right;font-weight:400"><i class="x">2</i><i class="d">3</i>6<i class="d">9</i><i class="x">1</i>.<i class="d">4</i><i class="d">7</i><i class="x">1</i><i class="x">1</i></div>
<svg class="r" style="left:495px;top:485px;" width="6" height="6" viewBox="0 0 6 6"><path d="M0 0H5.5L0 5.5Z" fill="#008000"/></svg>
<div class="c" style="left:495px;top:485px;width:81px;text-align:right;font-weight:400"><i class="d">4</i><i class="d">7</i>.<i class="d">3</i><i class="x">2</i>8</div>
<div class="c" style="left:577px;top:485px;width:73px;text-align:right;font-weight:400"><i class="d">3</i><i class="d">3</i><i class="d">9</i><u>°</u> <i class="d">3</i><i class="d">5</i>' <i class="x">1</i><i class="d">9</i>&quot;</div>
<div class="c" style="left:651px;top:485px;width:107px;text-align:right;font-weight:400">Infinity</div>
<svg class="r" style="left:759px;top:485px;" width="6" height="6" viewBox="0 0 6 6"><path d="M0 0H5.5L0 5.5Z" fill="#008000"/></svg>
<div class="c" style="left:759px;top:485px;width:56px;text-align:center;font-weight:400">-<i class="x">1</i>.<i class="d">3</i><i class="x">1</i> %</div>
<svg class="r" style="left:816px;top:485px;" width="6" height="6" viewBox="0 0 6 6"><path d="M0 0H5.5L0 5.5Z" fill="#008000"/></svg>
<div class="c" style="left:816px;top:485px;width:84px;text-align:center;font-weight:400"><i class="x">2</i><i class="d">4</i><i class="d">3</i>.<i class="x">1</i><i class="d">4</i><i class="x">2</i><i class="d">3</i></div>
<svg class="r" style="left:27px;top:505px;" width="6" height="6" viewBox="0 0 6 6"><path d="M0 0H5.5L0 5.5Z" fill="#008000"/></svg>
<div class="c" style="left:27px;top:505px;width:232px;text-align:left;font-weight:400"><i class="x">1</i><i class="x">1</i></div>
<div class="c" style="left:260px;top:505px;width:81px;text-align:right;font-weight:400"><i class="x">0</i>+<i class="x">0</i><i class="x">2</i><i class="x">0</i>.<i class="x">0</i><i class="x">0</i></div>
<svg class="r" style="left:342px;top:505px;" width="6" height="6" viewBox="0 0 6 6"><path d="M0 0H5.5L0 5.5Z" fill="#008000"/></svg>
<div class="c" style="left:342px;top:505px;width:80px;text-align:right;font-weight:400"><i class="d">3</i><i class="x">1</i><i class="x">2</i><i class="x">2</i>8<i class="d">9</i>.<i class="d">7</i><i class="d">9</i><i class="d">3</i><i class="d">7</i></div>
<svg class="r" style="left:423px;top:505px;" width="6" height="6" viewBox="0 0 6 6"><path d="M0 0H5.5L0 5.5Z" fill="#008000"/></svg>
<div class="c" style="left:423px;top:505px;width:71px;text-align:right;font-weight:400"><i class="x">2</i><i class="d">3</i><i class="d">7</i><i class="x">0</i><i class="x">0</i>.8<i class="d">4</i><i class="d">3</i><i class="x">2</i></div>
<svg class="r" style="left:495px;top:505px;" width="6" height="6" viewBox="0 0 6 6"><path d="M0 0H5.5L0 5.5Z" fill="#008000"/></svg>
<div class="c" style="left:495px;top:505px;width:81px;text-align:right;font-weight:400"><i class="d">4</i>6.<i class="d">9</i><i class="d">9</i><i class="x">1</i></div>
<div class="c" style="left:577px;top:505px;width:73px;text-align:right;font-weight:400"><i class="d">3</i><i class="d">3</i><i class="d">9</i><u>°</u> <i class="d">3</i><i class="d">5</i>' <i class="x">1</i><i class="d">9</i>&quot;</div>
<div class="c" style="left:651px;top:505px;width:107px;text-align:right;font-weight:400">Infinity</div>
<svg class="r" style="left:759px;top:505px;" width="6" height="6" viewBox="0 0 6 6"><path d="M0 0H5.5L0 5.5Z" fill="#008000"/></svg>
<div class="c" style="left:759px;top:505px;width:56px;text-align:center;font-weight:400">-<i class="d">5</i>.<i class="d">4</i><i class="d">3</i> %</div>
<svg class="r" style="left:816px;top:505px;" width="6" height="6" viewBox="0 0 6 6"><path d="M0 0H5.5L0 5.5Z" fill="#008000"/></svg>
<div class="c" style="left:816px;top:505px;width:84px;text-align:center;font-weight:400"><i class="x">2</i><i class="d">4</i><i class="d">3</i>.<i class="x">1</i><i class="d">4</i><i class="x">2</i><i class="d">3</i></div>
<svg class="r" style="left:27px;top:525px;" width="6" height="6" viewBox="0 0 6 6"><path d="M0 0H5.5L0 5.5Z" fill="#008000"/></svg>
<div class="c" style="left:27px;top:525px;width:232px;text-align:left;font-weight:400"><i class="x">1</i><i class="x">2</i></div>
<div class="c" style="left:260px;top:525px;width:81px;text-align:right;font-weight:400"><i class="x">0</i>+<i class="x">0</i><i class="x">2</i><i class="d">3</i>.<i class="x">1</i><i class="d">7</i></div>
<svg class="r" style="left:342px;top:525px;" width="6" height="6" viewBox="0 0 6 6"><path d="M0 0H5.5L0 5.5Z" fill="#008000"/></svg>
<div class="c" style="left:342px;top:525px;width:80px;text-align:right;font-weight:400"><i class="d">3</i><i class="x">1</i><i class="x">2</i><i class="x">2</i>88.68<i class="d">7</i><i class="d">9</i></div>
<svg class="r" style="left:423px;top:525px;" width="6" height="6" viewBox="0 0 6 6"><path d="M0 0H5.5L0 5.5Z" fill="#008000"/></svg>
<div class="c" style="left:423px;top:525px;width:71px;text-align:right;font-weight:400"><i class="x">2</i><i class="d">3</i><i class="d">7</i><i class="x">0</i><i class="d">3</i>.8<i class="x">1</i><i class="d">4</i><i class="d">9</i></div>
<svg class="r" style="left:495px;top:525px;" width="6" height="6" viewBox="0 0 6 6"><path d="M0 0H5.5L0 5.5Z" fill="#008000"/></svg>
<div class="c" style="left:495px;top:525px;width:81px;text-align:right;font-weight:400"><i class="d">4</i>6.<i class="d">7</i><i class="d">9</i>8</div>
<div class="c" style="left:577px;top:525px;width:73px;text-align:right;font-weight:400"><i class="d">3</i><i class="d">3</i><i class="d">9</i><u>°</u> <i class="d">3</i><i class="d">5</i>' <i class="x">1</i><i class="d">9</i>&quot;</div>
<div class="c" style="left:651px;top:525px;width:107px;text-align:right;font-weight:400">Infinity</div>
<svg class="r" style="left:759px;top:525px;" width="6" height="6" viewBox="0 0 6 6"><path d="M0 0H5.5L0 5.5Z" fill="#008000"/></svg>
<div class="c" style="left:759px;top:525px;width:56px;text-align:center;font-weight:400">-6.<i class="d">7</i><i class="d">3</i> %</div>
<div class="c" style="left:816px;top:525px;width:84px;text-align:center;font-weight:400">Infinity</div>
<svg class="r" style="left:27px;top:545px;" width="6" height="6" viewBox="0 0 6 6"><path d="M0 0H5.5L0 5.5Z" fill="#008000"/></svg>
<div class="c" style="left:27px;top:545px;width:232px;text-align:left;font-weight:400"><i class="x">1</i><i class="d">3</i></div>
<div class="c" style="left:260px;top:545px;width:81px;text-align:right;font-weight:400"><i class="x">0</i>+<i class="x">0</i><i class="d">3</i><i class="x">0</i>.<i class="x">0</i><i class="x">0</i></div>
<svg class="r" style="left:342px;top:545px;" width="6" height="6" viewBox="0 0 6 6"><path d="M0 0H5.5L0 5.5Z" fill="#008000"/></svg>
<div class="c" style="left:342px;top:545px;width:80px;text-align:right;font-weight:400"><i class="d">3</i><i class="x">1</i><i class="x">2</i><i class="x">2</i>86.<i class="d">3</i><i class="x">0</i>6<i class="x">1</i></div>
<svg class="r" style="left:423px;top:545px;" width="6" height="6" viewBox="0 0 6 6"><path d="M0 0H5.5L0 5.5Z" fill="#008000"/></svg>
<div class="c" style="left:423px;top:545px;width:71px;text-align:right;font-weight:400"><i class="x">2</i><i class="d">3</i><i class="d">7</i><i class="x">1</i><i class="x">0</i>.<i class="x">2</i><i class="x">1</i><i class="d">5</i><i class="d">4</i></div>
<svg class="r" style="left:495px;top:545px;" width="6" height="6" viewBox="0 0 6 6"><path d="M0 0H5.5L0 5.5Z" fill="#008000"/></svg>
<div class="c" style="left:495px;top:545px;width:81px;text-align:right;font-weight:400"><i class="d">4</i>6.<i class="d">3</i><i class="d">3</i><i class="d">9</i></div>
<div class="c" style="left:577px;top:545px;width:73px;text-align:right;font-weight:400"><i class="d">3</i><i class="d">3</i><i class="d">9</i><u>°</u> <i class="d">3</i><i class="d">5</i>' <i class="x">1</i><i class="d">9</i>&quot;</div>
<div class="c" style="left:651px;top:545px;width:107px;text-align:right;font-weight:400">Infinity</div>
<svg class="r" style="left:759px;top:545px;" width="6" height="6" viewBox="0 0 6 6"><path d="M0 0H5.5L0 5.5Z" fill="#008000"/></svg>
<div class="c" style="left:759px;top:545px;width:56px;text-align:center;font-weight:400">-6.<i class="d">7</i><i class="d">3</i> %</div>
<div class="c" style="left:816px;top:545px;width:84px;text-align:center;font-weight:400">Infinity</div>
<svg class="r" style="left:27px;top:565px;" width="6" height="6" viewBox="0 0 6 6"><path d="M0 0H5.5L0 5.5Z" fill="#008000"/></svg>
<div class="c" style="left:27px;top:565px;width:232px;text-align:left;font-weight:400"><i class="x">1</i><i class="d">4</i></div>
<div class="c" style="left:260px;top:565px;width:81px;text-align:right;font-weight:400"><i class="x">0</i>+<i class="x">0</i><i class="d">3</i><i class="d">5</i>.<i class="x">0</i><i class="d">5</i></div>
<svg class="r" style="left:342px;top:565px;" width="6" height="6" viewBox="0 0 6 6"><path d="M0 0H5.5L0 5.5Z" fill="#008000"/></svg>
<div class="c" style="left:342px;top:565px;width:80px;text-align:right;font-weight:400"><i class="d">3</i><i class="x">1</i><i class="x">2</i><i class="x">2</i>8<i class="d">4</i>.<i class="d">5</i><i class="d">4</i><i class="d">4</i><i class="x">2</i></div>
<svg class="r" style="left:423px;top:565px;" width="6" height="6" viewBox="0 0 6 6"><path d="M0 0H5.5L0 5.5Z" fill="#008000"/></svg>
<div class="c" style="left:423px;top:565px;width:71px;text-align:right;font-weight:400"><i class="x">2</i><i class="d">3</i><i class="d">7</i><i class="x">1</i><i class="d">4</i>.<i class="d">9</i><i class="d">5</i><i class="x">0</i><i class="x">2</i></div>
<svg class="r" style="left:495px;top:565px;" width="6" height="6" viewBox="0 0 6 6"><path d="M0 0H5.5L0 5.5Z" fill="#008000"/></svg>
<div class="c" style="left:495px;top:565px;width:81px;text-align:right;font-weight:400"><i class="d">4</i><i class="d">5</i>.<i class="d">9</i><i class="d">9</i><i class="d">9</i></div>
<div class="c" style="left:577px;top:565px;width:73px;text-align:right;font-weight:400"><i class="d">3</i><i class="d">3</i><i class="d">9</i><u>°</u> <i class="d">3</i><i class="d">5</i>' <i class="x">1</i><i class="d">9</i>&quot;</div>
<svg class="r" style="left:651px;top:565px;" width="6" height="6" viewBox="0 0 6 6"><path d="M0 0H5.5L0 5.5Z" fill="#008000"/></svg>
<div class="c" style="left:651px;top:565px;width:107px;text-align:right;font-weight:400">-<i class="d">9</i><i class="d">9</i>.<i class="x">0</i>6<i class="x">0</i><i class="x">0</i></div>
<svg class="r" style="left:759px;top:565px;" width="6" height="6" viewBox="0 0 6 6"><path d="M0 0H5.5L0 5.5Z" fill="#008000"/></svg>
<div class="c" style="left:759px;top:565px;width:56px;text-align:center;font-weight:400">-6.<i class="d">7</i><i class="d">3</i> %</div>
<div class="c" style="left:816px;top:565px;width:84px;text-align:center;font-weight:400">Infinity</div>
<svg class="r" style="left:27px;top:585px;" width="6" height="6" viewBox="0 0 6 6"><path d="M0 0H5.5L0 5.5Z" fill="#008000"/></svg>
<div class="c" style="left:27px;top:585px;width:232px;text-align:left;font-weight:400"><i class="x">1</i><i class="d">5</i></div>
<div class="c" style="left:260px;top:585px;width:81px;text-align:right;font-weight:400"><i class="x">0</i>+<i class="x">0</i><i class="d">3</i><i class="d">9</i>.<i class="d">7</i>6</div>
<svg class="r" style="left:342px;top:585px;" width="6" height="6" viewBox="0 0 6 6"><path d="M0 0H5.5L0 5.5Z" fill="#008000"/></svg>
<div class="c" style="left:342px;top:585px;width:80px;text-align:right;font-weight:400"><i class="d">3</i><i class="x">1</i><i class="x">2</i><i class="x">2</i>8<i class="x">2</i>.<i class="d">7</i><i class="d">9</i><i class="d">7</i><i class="d">7</i></div>
<svg class="r" style="left:423px;top:585px;" width="6" height="6" viewBox="0 0 6 6"><path d="M0 0H5.5L0 5.5Z" fill="#008000"/></svg>
<div class="c" style="left:423px;top:585px;width:71px;text-align:right;font-weight:400"><i class="x">2</i><i class="d">3</i><i class="d">7</i><i class="x">1</i><i class="d">9</i>.<i class="d">3</i><i class="x">2</i><i class="x">2</i>8</div>
<svg class="r" style="left:495px;top:585px;" width="6" height="6" viewBox="0 0 6 6"><path d="M0 0H5.5L0 5.5Z" fill="#008000"/></svg>
<div class="c" style="left:495px;top:585px;width:81px;text-align:right;font-weight:400"><i class="d">4</i><i class="d">5</i>.68<i class="x">2</i></div>
<div class="c" style="left:577px;top:585px;width:73px;text-align:right;font-weight:400"><i class="d">3</i><i class="d">3</i>6<u>°</u> <i class="d">5</i><i class="x">1</i>' <i class="d">5</i><i class="d">4</i>&quot;</div>
<svg class="r" style="left:651px;top:585px;" width="6" height="6" viewBox="0 0 6 6"><path d="M0 0H5.5L0 5.5Z" fill="#008000"/></svg>
<div class="c" style="left:651px;top:585px;width:107px;text-align:right;font-weight:400">-<i class="d">9</i><i class="d">9</i>.<i class="x">0</i>6<i class="x">0</i><i class="x">0</i></div>
<svg class="r" style="left:759px;top:585px;" width="6" height="6" viewBox="0 0 6 6"><path d="M0 0H5.5L0 5.5Z" fill="#008000"/></svg>
<div class="c" style="left:759px;top:585px;width:56px;text-align:center;font-weight:400">-6.<i class="d">7</i><i class="d">3</i> %</div>
<svg class="r" style="left:816px;top:585px;" width="6" height="6" viewBox="0 0 6 6"><path d="M0 0H5.5L0 5.5Z" fill="#008000"/></svg>
<div class="c" style="left:816px;top:585px;width:84px;text-align:center;font-weight:400">-<i class="x">1</i>8<i class="x">0</i><i class="d">7</i>.<i class="d">7</i><i class="d">7</i><i class="d">5</i><i class="d">3</i></div>
<svg class="r" style="left:27px;top:605px;" width="6" height="6" viewBox="0 0 6 6"><path d="M0 0H5.5L0 5.5Z" fill="#008000"/></svg>
<div class="c" style="left:27px;top:605px;width:232px;text-align:left;font-weight:400"><i class="x">1</i>6</div>
<div class="c" style="left:260px;top:605px;width:81px;text-align:right;font-weight:400"><i class="x">0</i>+<i class="x">0</i><i class="d">4</i><i class="x">0</i>.<i class="x">0</i><i class="x">0</i></div>
<svg class="r" style="left:342px;top:605px;" width="6" height="6" viewBox="0 0 6 6"><path d="M0 0H5.5L0 5.5Z" fill="#008000"/></svg>
<div class="c" style="left:342px;top:605px;width:80px;text-align:right;font-weight:400"><i class="d">3</i><i class="x">1</i><i class="x">2</i><i class="x">2</i>8<i class="x">2</i>.<i class="d">7</i><i class="x">0</i><i class="d">3</i><i class="d">5</i></div>
<svg class="r" style="left:423px;top:605px;" width="6" height="6" viewBox="0 0 6 6"><path d="M0 0H5.5L0 5.5Z" fill="#008000"/></svg>
<div class="c" style="left:423px;top:605px;width:71px;text-align:right;font-weight:400"><i class="x">2</i><i class="d">3</i><i class="d">7</i><i class="x">1</i><i class="d">9</i>.<i class="d">5</i><i class="d">4</i><i class="x">2</i><i class="d">5</i></div>
<svg class="r" style="left:495px;top:605px;" width="6" height="6" viewBox="0 0 6 6"><path d="M0 0H5.5L0 5.5Z" fill="#008000"/></svg>
<div class="c" style="left:495px;top:605px;width:81px;text-align:right;font-weight:400"><i class="d">4</i><i class="d">5</i>.666</div>
<div class="c" style="left:577px;top:605px;width:73px;text-align:right;font-weight:400"><i class="d">3</i><i class="d">3</i>6<u>°</u> <i class="d">4</i><i class="d">3</i>' <i class="d">3</i><i class="d">7</i>&quot;</div>
<svg class="r" style="left:651px;top:605px;" width="6" height="6" viewBox="0 0 6 6"><path d="M0 0H5.5L0 5.5Z" fill="#008000"/></svg>
<div class="c" style="left:651px;top:605px;width:107px;text-align:right;font-weight:400">-<i class="d">9</i><i class="d">9</i>.<i class="x">0</i>6<i class="x">0</i><i class="x">0</i></div>
<svg class="r" style="left:759px;top:605px;" width="6" height="6" viewBox="0 0 6 6"><path d="M0 0H5.5L0 5.5Z" fill="#008000"/></svg>
<div class="c" style="left:759px;top:605px;width:56px;text-align:center;font-weight:400">-6.<i class="d">7</i><i class="x">2</i> %</div>
<svg class="r" style="left:816px;top:605px;" width="6" height="6" viewBox="0 0 6 6"><path d="M0 0H5.5L0 5.5Z" fill="#008000"/></svg>
<div class="c" style="left:816px;top:605px;width:84px;text-align:center;font-weight:400">-<i class="x">1</i>8<i class="x">0</i><i class="d">7</i>.<i class="d">7</i><i class="d">7</i><i class="d">5</i><i class="d">3</i></div>
<svg class="r" style="left:27px;top:625px;" width="6" height="6" viewBox="0 0 6 6"><path d="M0 0H5.5L0 5.5Z" fill="#008000"/></svg>
<div class="c" style="left:27px;top:625px;width:232px;text-align:left;font-weight:400"><i class="x">1</i><i class="d">7</i></div>
<div class="c" style="left:260px;top:625px;width:81px;text-align:right;font-weight:400"><i class="x">0</i>+<i class="x">0</i><i class="d">5</i><i class="x">0</i>.<i class="x">0</i><i class="x">0</i></div>
<svg class="r" style="left:342px;top:625px;" width="6" height="6" viewBox="0 0 6 6"><path d="M0 0H5.5L0 5.5Z" fill="#008000"/></svg>
<div class="c" style="left:342px;top:625px;width:80px;text-align:right;font-weight:400"><i class="d">3</i><i class="x">1</i><i class="x">2</i><i class="x">2</i><i class="d">7</i>8.<i class="x">2</i><i class="d">9</i><i class="d">5</i>8</div>
<svg class="r" style="left:423px;top:625px;" width="6" height="6" viewBox="0 0 6 6"><path d="M0 0H5.5L0 5.5Z" fill="#008000"/></svg>
<div class="c" style="left:423px;top:625px;width:71px;text-align:right;font-weight:400"><i class="x">2</i><i class="d">3</i><i class="d">7</i><i class="x">2</i>8.<i class="d">5</i><i class="x">1</i><i class="d">4</i><i class="x">0</i></div>
<svg class="r" style="left:495px;top:625px;" width="6" height="6" viewBox="0 0 6 6"><path d="M0 0H5.5L0 5.5Z" fill="#008000"/></svg>
<div class="c" style="left:495px;top:625px;width:81px;text-align:right;font-weight:400"><i class="d">4</i><i class="d">5</i>.<i class="x">0</i><i class="x">2</i><i class="x">2</i></div>
<div class="c" style="left:577px;top:625px;width:73px;text-align:right;font-weight:400"><i class="d">3</i><i class="d">3</i><i class="x">0</i><u>°</u> <i class="d">5</i>6' <i class="d">3</i><i class="d">4</i>&quot;</div>
<svg class="r" style="left:651px;top:625px;" width="6" height="6" viewBox="0 0 6 6"><path d="M0 0H5.5L0 5.5Z" fill="#008000"/></svg>
<div class="c" style="left:651px;top:625px;width:107px;text-align:right;font-weight:400">-<i class="d">9</i><i class="d">9</i>.<i class="x">0</i>6<i class="x">0</i><i class="x">0</i></div>
<svg class="r" style="left:759px;top:625px;" width="6" height="6" viewBox="0 0 6 6"><path d="M0 0H5.5L0 5.5Z" fill="#008000"/></svg>
<div class="c" style="left:759px;top:625px;width:56px;text-align:center;font-weight:400">-6.<i class="x">1</i>6 %</div>
<svg class="r" style="left:816px;top:625px;" width="6" height="6" viewBox="0 0 6 6"><path d="M0 0H5.5L0 5.5Z" fill="#008000"/></svg>
<div class="c" style="left:816px;top:625px;width:84px;text-align:center;font-weight:400">-<i class="x">1</i>8<i class="x">0</i><i class="d">7</i>.<i class="d">7</i><i class="d">7</i><i class="d">5</i><i class="d">3</i></div>
<svg class="r" style="left:27px;top:645px;" width="6" height="6" viewBox="0 0 6 6"><path d="M0 0H5.5L0 5.5Z" fill="#008000"/></svg>
<div class="c" style="left:27px;top:645px;width:232px;text-align:left;font-weight:400"><i class="x">1</i>8</div>
<div class="c" style="left:260px;top:645px;width:81px;text-align:right;font-weight:400"><i class="x">0</i>+<i class="x">0</i>6<i class="x">0</i>.<i class="x">0</i><i class="x">0</i></div>
<svg class="r" style="left:342px;top:645px;" width="6" height="6" viewBox="0 0 6 6"><path d="M0 0H5.5L0 5.5Z" fill="#008000"/></svg>
<div class="c" style="left:342px;top:645px;width:80px;text-align:right;font-weight:400"><i class="d">3</i><i class="x">1</i><i class="x">2</i><i class="x">2</i><i class="d">7</i><i class="d">3</i>.<i class="x">0</i><i class="x">0</i>6<i class="d">4</i></div>
<svg class="r" style="left:423px;top:645px;" width="6" height="6" viewBox="0 0 6 6"><path d="M0 0H5.5L0 5.5Z" fill="#008000"/></svg>
<div class="c" style="left:423px;top:645px;width:71px;text-align:right;font-weight:400"><i class="x">2</i><i class="d">3</i><i class="d">7</i><i class="d">3</i>6.<i class="d">9</i><i class="d">9</i><i class="d">5</i>6</div>
<svg class="r" style="left:495px;top:645px;" width="6" height="6" viewBox="0 0 6 6"><path d="M0 0H5.5L0 5.5Z" fill="#008000"/></svg>
<div class="c" style="left:495px;top:645px;width:81px;text-align:right;font-weight:400"><i class="d">4</i><i class="d">4</i>.<i class="d">4</i><i class="d">3</i><i class="d">3</i></div>
<div class="c" style="left:577px;top:645px;width:73px;text-align:right;font-weight:400"><i class="d">3</i><i class="x">2</i><i class="d">5</i><u>°</u> <i class="d">9</i>' <i class="d">3</i><i class="x">2</i>&quot;</div>
<svg class="r" style="left:651px;top:645px;" width="6" height="6" viewBox="0 0 6 6"><path d="M0 0H5.5L0 5.5Z" fill="#008000"/></svg>
<div class="c" style="left:651px;top:645px;width:107px;text-align:right;font-weight:400">-<i class="d">9</i><i class="d">9</i>.<i class="x">0</i>6<i class="x">0</i><i class="x">0</i></div>
<svg class="r" style="left:759px;top:645px;" width="6" height="6" viewBox="0 0 6 6"><path d="M0 0H5.5L0 5.5Z" fill="#008000"/></svg>
<div class="c" style="left:759px;top:645px;width:56px;text-align:center;font-weight:400">-<i class="d">5</i>.6<i class="x">1</i> %</div>
<svg class="r" style="left:816px;top:645px;" width="6" height="6" viewBox="0 0 6 6"><path d="M0 0H5.5L0 5.5Z" fill="#008000"/></svg>
<div class="c" style="left:816px;top:645px;width:84px;text-align:center;font-weight:400">-<i class="x">1</i>8<i class="x">0</i><i class="d">7</i>.<i class="d">7</i><i class="d">7</i><i class="d">5</i><i class="d">3</i></div>
<svg class="r" style="left:27px;top:665px;" width="6" height="6" viewBox="0 0 6 6"><path d="M0 0H5.5L0 5.5Z" fill="#008000"/></svg>
<div class="c" style="left:27px;top:665px;width:232px;text-align:left;font-weight:400"><i class="x">1</i><i class="d">9</i></div>
<div class="c" style="left:260px;top:665px;width:81px;text-align:right;font-weight:400"><i class="x">0</i>+<i class="x">0</i><i class="d">7</i><i class="x">0</i>.<i class="x">0</i><i class="x">0</i></div>
<svg class="r" style="left:342px;top:665px;" width="6" height="6" viewBox="0 0 6 6"><path d="M0 0H5.5L0 5.5Z" fill="#008000"/></svg>
<div class="c" style="left:342px;top:665px;width:80px;text-align:right;font-weight:400"><i class="d">3</i><i class="x">1</i><i class="x">2</i><i class="x">2</i>66.88<i class="d">9</i><i class="x">2</i></div>
<svg class="r" style="left:423px;top:665px;" width="6" height="6" viewBox="0 0 6 6"><path d="M0 0H5.5L0 5.5Z" fill="#008000"/></svg>
<div class="c" style="left:423px;top:665px;width:71px;text-align:right;font-weight:400"><i class="x">2</i><i class="d">3</i><i class="d">7</i><i class="d">4</i><i class="d">4</i>.<i class="d">9</i><i class="x">0</i><i class="x">1</i><i class="x">0</i></div>
<svg class="r" style="left:495px;top:665px;" width="6" height="6" viewBox="0 0 6 6"><path d="M0 0H5.5L0 5.5Z" fill="#008000"/></svg>
<div class="c" style="left:495px;top:665px;width:81px;text-align:right;font-weight:400"><i class="d">4</i><i class="d">3</i>.<i class="d">9</i><i class="x">0</i><i class="x">0</i></div>
<div class="c" style="left:577px;top:665px;width:73px;text-align:right;font-weight:400"><i class="d">3</i><i class="x">1</i><i class="d">9</i><u>°</u> <i class="x">2</i><i class="x">2</i>' <i class="d">3</i><i class="x">0</i>&quot;</div>
<svg class="r" style="left:651px;top:665px;" width="6" height="6" viewBox="0 0 6 6"><path d="M0 0H5.5L0 5.5Z" fill="#008000"/></svg>
<div class="c" style="left:651px;top:665px;width:107px;text-align:right;font-weight:400">-<i class="d">9</i><i class="d">9</i>.<i class="x">0</i>6<i class="x">0</i><i class="x">0</i></div>
<svg class="r" style="left:759px;top:665px;" width="6" height="6" viewBox="0 0 6 6"><path d="M0 0H5.5L0 5.5Z" fill="#008000"/></svg>
<div class="c" style="left:759px;top:665px;width:56px;text-align:center;font-weight:400">-<i class="d">5</i>.<i class="x">0</i>6 %</div>
<svg class="r" style="left:816px;top:665px;" width="6" height="6" viewBox="0 0 6 6"><path d="M0 0H5.5L0 5.5Z" fill="#008000"/></svg>
<div class="c" style="left:816px;top:665px;width:84px;text-align:center;font-weight:400">-<i class="x">1</i>8<i class="x">0</i><i class="d">7</i>.<i class="d">7</i><i class="d">7</i><i class="d">5</i><i class="d">3</i></div>
<svg class="r" style="left:27px;top:685px;" width="6" height="6" viewBox="0 0 6 6"><path d="M0 0H5.5L0 5.5Z" fill="#008000"/></svg>
<div class="c" style="left:27px;top:685px;width:232px;text-align:left;font-weight:400"><i class="x">2</i><i class="x">0</i></div>
<div class="c" style="left:260px;top:685px;width:81px;text-align:right;font-weight:400"><i class="x">0</i>+<i class="x">0</i>8<i class="x">0</i>.<i class="x">0</i><i class="x">0</i></div>
<svg class="r" style="left:342px;top:685px;" width="6" height="6" viewBox="0 0 6 6"><path d="M0 0H5.5L0 5.5Z" fill="#008000"/></svg>
<div class="c" style="left:342px;top:685px;width:80px;text-align:right;font-weight:400"><i class="d">3</i><i class="x">1</i><i class="x">2</i><i class="x">2</i>6<i class="x">0</i>.<i class="x">0</i><i class="x">0</i>6<i class="d">5</i></div>
<svg class="r" style="left:423px;top:685px;" width="6" height="6" viewBox="0 0 6 6"><path d="M0 0H5.5L0 5.5Z" fill="#008000"/></svg>
<div class="c" style="left:423px;top:685px;width:71px;text-align:right;font-weight:400"><i class="x">2</i><i class="d">3</i><i class="d">7</i><i class="d">5</i><i class="x">2</i>.<i class="x">1</i><i class="d">4</i><i class="d">9</i>6</div>
<svg class="r" style="left:495px;top:685px;" width="6" height="6" viewBox="0 0 6 6"><path d="M0 0H5.5L0 5.5Z" fill="#008000"/></svg>
<div class="c" style="left:495px;top:685px;width:81px;text-align:right;font-weight:400"><i class="d">4</i><i class="d">3</i>.<i class="d">4</i><i class="x">2</i><i class="x">2</i></div>
<div class="c" style="left:577px;top:685px;width:73px;text-align:right;font-weight:400"><i class="d">3</i><i class="x">1</i><i class="d">3</i><u>°</u> <i class="d">3</i><i class="d">5</i>' <i class="x">2</i>8&quot;</div>
<svg class="r" style="left:651px;top:685px;" width="6" height="6" viewBox="0 0 6 6"><path d="M0 0H5.5L0 5.5Z" fill="#008000"/></svg>
<div class="c" style="left:651px;top:685px;width:107px;text-align:right;font-weight:400">-<i class="d">9</i><i class="d">9</i>.<i class="x">0</i>6<i class="x">0</i><i class="x">0</i></div>
<svg class="r" style="left:759px;top:685px;" width="6" height="6" viewBox="0 0 6 6"><path d="M0 0H5.5L0 5.5Z" fill="#008000"/></svg>
<div class="c" style="left:759px;top:685px;width:56px;text-align:center;font-weight:400">-<i class="d">4</i>.<i class="d">5</i><i class="x">0</i> %</div>
<svg class="r" style="left:816px;top:685px;" width="6" height="6" viewBox="0 0 6 6"><path d="M0 0H5.5L0 5.5Z" fill="#008000"/></svg>
<div class="c" style="left:816px;top:685px;width:84px;text-align:center;font-weight:400">-<i class="x">1</i>8<i class="x">0</i><i class="d">7</i>.<i class="d">7</i><i class="d">7</i><i class="d">5</i><i class="d">3</i></div>
<svg class="r" style="left:27px;top:705px;" width="6" height="6" viewBox="0 0 6 6"><path d="M0 0H5.5L0 5.5Z" fill="#008000"/></svg>
<div class="c" style="left:27px;top:705px;width:232px;text-align:left;font-weight:400"><i class="x">2</i><i class="x">1</i></div>
<div class="c" style="left:260px;top:705px;width:81px;text-align:right;font-weight:400"><i class="x">0</i>+<i class="x">0</i>8<i class="d">9</i>.<i class="d">7</i>6</div>
<svg class="r" style="left:342px;top:705px;" width="6" height="6" viewBox="0 0 6 6"><path d="M0 0H5.5L0 5.5Z" fill="#008000"/></svg>
<div class="c" style="left:342px;top:705px;width:80px;text-align:right;font-weight:400"><i class="d">3</i><i class="x">1</i><i class="x">2</i><i class="x">2</i><i class="d">5</i><i class="x">2</i>.6<i class="x">1</i>6<i class="d">9</i></div>
<svg class="r" style="left:423px;top:705px;" width="6" height="6" viewBox="0 0 6 6"><path d="M0 0H5.5L0 5.5Z" fill="#008000"/></svg>
<div class="c" style="left:423px;top:705px;width:71px;text-align:right;font-weight:400"><i class="x">2</i><i class="d">3</i><i class="d">7</i><i class="d">5</i>8.<i class="d">5</i><i class="x">2</i><i class="x">0</i><i class="d">9</i></div>
<svg class="r" style="left:495px;top:705px;" width="6" height="6" viewBox="0 0 6 6"><path d="M0 0H5.5L0 5.5Z" fill="#008000"/></svg>
<div class="c" style="left:495px;top:705px;width:81px;text-align:right;font-weight:400"><i class="d">4</i><i class="d">3</i>.<i class="x">0</i><i class="x">0</i><i class="d">9</i></div>
<div class="c" style="left:577px;top:705px;width:73px;text-align:right;font-weight:400"><i class="d">3</i><i class="x">0</i><i class="d">7</i><u>°</u> <i class="d">5</i>6' <i class="d">4</i><i class="d">3</i>&quot;</div>
<svg class="r" style="left:651px;top:705px;" width="6" height="6" viewBox="0 0 6 6"><path d="M0 0H5.5L0 5.5Z" fill="#008000"/></svg>
<div class="c" style="left:651px;top:705px;width:107px;text-align:right;font-weight:400">-<i class="d">9</i><i class="d">9</i>.<i class="x">0</i>6<i class="x">0</i><i class="x">0</i></div>
<svg class="r" style="left:759px;top:705px;" width="6" height="6" viewBox="0 0 6 6"><path d="M0 0H5.5L0 5.5Z" fill="#008000"/></svg>
<div class="c" style="left:759px;top:705px;width:56px;text-align:center;font-weight:400">-<i class="d">3</i>.<i class="d">9</i>6 %</div>
<div class="c" style="left:816px;top:705px;width:84px;text-align:center;font-weight:400">Infinity</div>
<svg class="r" style="left:27px;top:725px;" width="6" height="6" viewBox="0 0 6 6"><path d="M0 0H5.5L0 5.5Z" fill="#008000"/></svg>
<div class="c" style="left:27px;top:725px;width:232px;text-align:left;font-weight:400"><i class="x">2</i><i class="x">2</i></div>
<div class="c" style="left:260px;top:725px;width:81px;text-align:right;font-weight:400"><i class="x">0</i>+<i class="x">0</i><i class="d">9</i><i class="x">0</i>.<i class="x">0</i><i class="x">0</i></div>
<svg class="r" style="left:342px;top:725px;" width="6" height="6" viewBox="0 0 6 6"><path d="M0 0H5.5L0 5.5Z" fill="#008000"/></svg>
<div class="c" style="left:342px;top:725px;width:80px;text-align:right;font-weight:400"><i class="d">3</i><i class="x">1</i><i class="x">2</i><i class="x">2</i><i class="d">5</i><i class="x">2</i>.<i class="d">4</i><i class="x">2</i>8<i class="x">2</i></div>
<svg class="r" style="left:423px;top:725px;" width="6" height="6" viewBox="0 0 6 6"><path d="M0 0H5.5L0 5.5Z" fill="#008000"/></svg>
<div class="c" style="left:423px;top:725px;width:71px;text-align:right;font-weight:400"><i class="x">2</i><i class="d">3</i><i class="d">7</i><i class="d">5</i>8.66<i class="d">7</i><i class="d">7</i></div>
<svg class="r" style="left:495px;top:725px;" width="6" height="6" viewBox="0 0 6 6"><path d="M0 0H5.5L0 5.5Z" fill="#008000"/></svg>
<div class="c" style="left:495px;top:725px;width:81px;text-align:right;font-weight:400"><i class="d">4</i><i class="x">2</i>.<i class="d">9</i><i class="d">9</i><i class="d">9</i></div>
<div class="c" style="left:577px;top:725px;width:73px;text-align:right;font-weight:400"><i class="d">3</i><i class="x">0</i><i class="d">7</i><u>°</u> <i class="d">4</i>8' <i class="x">2</i>6&quot;</div>
<svg class="r" style="left:651px;top:725px;" width="6" height="6" viewBox="0 0 6 6"><path d="M0 0H5.5L0 5.5Z" fill="#008000"/></svg>
<div class="c" style="left:651px;top:725px;width:107px;text-align:right;font-weight:400">-<i class="d">9</i><i class="d">9</i>.<i class="x">0</i>6<i class="x">0</i><i class="x">0</i></div>
<svg class="r" style="left:759px;top:725px;" width="6" height="6" viewBox="0 0 6 6"><path d="M0 0H5.5L0 5.5Z" fill="#008000"/></svg>
<div class="c" style="left:759px;top:725px;width:56px;text-align:center;font-weight:400">-<i class="d">3</i>.<i class="d">9</i>6 %</div>
<div class="c" style="left:816px;top:725px;width:84px;text-align:center;font-weight:400">Infinity</div>
<svg class="r" style="left:27px;top:745px;" width="6" height="6" viewBox="0 0 6 6"><path d="M0 0H5.5L0 5.5Z" fill="#008000"/></svg>
<div class="c" style="left:27px;top:745px;width:232px;text-align:left;font-weight:400"><i class="x">2</i><i class="d">3</i></div>
<div class="c" style="left:260px;top:745px;width:81px;text-align:right;font-weight:400"><i class="x">0</i>+<i class="x">1</i><i class="x">0</i><i class="x">0</i>.<i class="x">0</i><i class="x">0</i></div>
<svg class="r" style="left:342px;top:745px;" width="6" height="6" viewBox="0 0 6 6"><path d="M0 0H5.5L0 5.5Z" fill="#008000"/></svg>
<div class="c" style="left:342px;top:745px;width:80px;text-align:right;font-weight:400"><i class="d">3</i><i class="x">1</i><i class="x">2</i><i class="x">2</i><i class="d">4</i><i class="d">4</i>.<i class="x">2</i><i class="d">3</i><i class="x">1</i><i class="d">7</i></div>
<svg class="r" style="left:423px;top:745px;" width="6" height="6" viewBox="0 0 6 6"><path d="M0 0H5.5L0 5.5Z" fill="#008000"/></svg>
<div class="c" style="left:423px;top:745px;width:71px;text-align:right;font-weight:400"><i class="x">2</i><i class="d">3</i><i class="d">7</i>6<i class="d">4</i>.<i class="d">3</i>88<i class="d">9</i></div>
<svg class="r" style="left:495px;top:745px;" width="6" height="6" viewBox="0 0 6 6"><path d="M0 0H5.5L0 5.5Z" fill="#008000"/></svg>
<div class="c" style="left:495px;top:745px;width:81px;text-align:right;font-weight:400"><i class="d">4</i><i class="x">2</i>.6<i class="x">0</i><i class="d">3</i></div>
<div class="c" style="left:577px;top:745px;width:73px;text-align:right;font-weight:400"><i class="d">3</i><i class="x">0</i><i class="x">2</i><u>°</u> <i class="x">1</i>' <i class="x">2</i><i class="d">3</i>&quot;</div>
<svg class="r" style="left:651px;top:745px;" width="6" height="6" viewBox="0 0 6 6"><path d="M0 0H5.5L0 5.5Z" fill="#008000"/></svg>
<div class="c" style="left:651px;top:745px;width:107px;text-align:right;font-weight:400">-<i class="d">9</i><i class="d">9</i>.<i class="x">0</i>6<i class="x">0</i><i class="x">0</i></div>
<svg class="r" style="left:759px;top:745px;" width="6" height="6" viewBox="0 0 6 6"><path d="M0 0H5.5L0 5.5Z" fill="#008000"/></svg>
<div class="c" style="left:759px;top:745px;width:56px;text-align:center;font-weight:400">-<i class="d">3</i>.<i class="d">9</i>6 %</div>
<div class="c" style="left:816px;top:745px;width:84px;text-align:center;font-weight:400">Infinity</div>
<svg class="r" style="left:27px;top:765px;" width="6" height="6" viewBox="0 0 6 6"><path d="M0 0H5.5L0 5.5Z" fill="#008000"/></svg>
<div class="c" style="left:27px;top:765px;width:232px;text-align:left;font-weight:400"><i class="x">2</i><i class="d">4</i></div>
<div class="c" style="left:260px;top:765px;width:81px;text-align:right;font-weight:400"><i class="x">0</i>+<i class="x">1</i><i class="x">0</i><i class="x">1</i>.<i class="d">3</i>6</div>
<svg class="r" style="left:342px;top:765px;" width="6" height="6" viewBox="0 0 6 6"><path d="M0 0H5.5L0 5.5Z" fill="#008000"/></svg>
<div class="c" style="left:342px;top:765px;width:80px;text-align:right;font-weight:400"><i class="d">3</i><i class="x">1</i><i class="x">2</i><i class="x">2</i><i class="d">4</i><i class="d">3</i>.<i class="x">0</i><i class="d">7</i><i class="d">3</i><i class="x">2</i></div>
<svg class="r" style="left:423px;top:765px;" width="6" height="6" viewBox="0 0 6 6"><path d="M0 0H5.5L0 5.5Z" fill="#008000"/></svg>
<div class="c" style="left:423px;top:765px;width:71px;text-align:right;font-weight:400"><i class="x">2</i><i class="d">3</i><i class="d">7</i>6<i class="d">5</i>.<i class="x">1</i><i class="x">0</i><i class="x">2</i><i class="d">5</i></div>
<svg class="r" style="left:495px;top:765px;" width="6" height="6" viewBox="0 0 6 6"><path d="M0 0H5.5L0 5.5Z" fill="#008000"/></svg>
<div class="c" style="left:495px;top:765px;width:81px;text-align:right;font-weight:400"><i class="d">4</i><i class="x">2</i>.<i class="d">5</i><i class="d">4</i><i class="d">9</i></div>
<div class="c" style="left:577px;top:765px;width:73px;text-align:right;font-weight:400"><i class="d">3</i><i class="x">0</i><i class="x">1</i><u>°</u> <i class="x">1</i><i class="d">4</i>' <i class="x">1</i><i class="x">0</i>&quot;</div>
<svg class="r" style="left:651px;top:765px;" width="6" height="6" viewBox="0 0 6 6"><path d="M0 0H5.5L0 5.5Z" fill="#008000"/></svg>
<div class="c" style="left:651px;top:765px;width:107px;text-align:right;font-weight:400">-<i class="d">9</i><i class="d">9</i>.<i class="x">0</i>6<i class="x">0</i><i class="x">0</i></div>
<svg class="r" style="left:759px;top:765px;" width="6" height="6" viewBox="0 0 6 6"><path d="M0 0H5.5L0 5.5Z" fill="#008000"/></svg>
<div class="c" style="left:759px;top:765px;width:56px;text-align:center;font-weight:400"><i class="x">0</i>.<i class="x">0</i><i class="x">0</i> %</div>
<div class="c" style="left:816px;top:765px;width:84px;text-align:center;font-weight:400">Infinity</div>
<svg class="r" style="left:27px;top:785px;" width="6" height="6" viewBox="0 0 6 6"><path d="M0 0H5.5L0 5.5Z" fill="#008000"/></svg>
<div class="c" style="left:27px;top:785px;width:232px;text-align:left;font-weight:400"><i class="x">2</i><i class="d">5</i></div>
<div class="c" style="left:260px;top:785px;width:81px;text-align:right;font-weight:400"><i class="x">0</i>+<i class="x">1</i><i class="x">1</i><i class="x">0</i>.<i class="x">0</i><i class="x">0</i></div>
<svg class="r" style="left:342px;top:785px;" width="6" height="6" viewBox="0 0 6 6"><path d="M0 0H5.5L0 5.5Z" fill="#008000"/></svg>
<div class="c" style="left:342px;top:785px;width:80px;text-align:right;font-weight:400"><i class="d">3</i><i class="x">1</i><i class="x">2</i><i class="x">2</i><i class="d">3</i><i class="d">5</i>.<i class="d">5</i><i class="x">0</i><i class="x">0</i><i class="d">4</i></div>
<svg class="r" style="left:423px;top:785px;" width="6" height="6" viewBox="0 0 6 6"><path d="M0 0H5.5L0 5.5Z" fill="#008000"/></svg>
<div class="c" style="left:423px;top:785px;width:71px;text-align:right;font-weight:400"><i class="x">2</i><i class="d">3</i><i class="d">7</i>6<i class="d">9</i>.<i class="x">2</i><i class="d">5</i><i class="d">5</i><i class="x">0</i></div>
<svg class="r" style="left:495px;top:785px;" width="6" height="6" viewBox="0 0 6 6"><path d="M0 0H5.5L0 5.5Z" fill="#008000"/></svg>
<div class="c" style="left:495px;top:785px;width:81px;text-align:right;font-weight:400"><i class="d">4</i><i class="x">2</i>.<i class="d">5</i><i class="d">4</i><i class="d">9</i></div>
<div class="c" style="left:577px;top:785px;width:73px;text-align:right;font-weight:400"><i class="x">2</i><i class="d">9</i>6<u>°</u> <i class="x">1</i><i class="d">4</i>' <i class="x">2</i><i class="x">1</i>&quot;</div>
<svg class="r" style="left:651px;top:785px;" width="6" height="6" viewBox="0 0 6 6"><path d="M0 0H5.5L0 5.5Z" fill="#008000"/></svg>
<div class="c" style="left:651px;top:785px;width:107px;text-align:right;font-weight:400">-<i class="d">9</i><i class="d">9</i>.<i class="x">0</i>6<i class="x">0</i><i class="x">0</i></div>
<svg class="r" style="left:759px;top:785px;" width="6" height="6" viewBox="0 0 6 6"><path d="M0 0H5.5L0 5.5Z" fill="#008000"/></svg>
<div class="c" style="left:759px;top:785px;width:56px;text-align:center;font-weight:400"><i class="x">0</i>.<i class="x">0</i><i class="x">0</i> %</div>
<div class="c" style="left:816px;top:785px;width:84px;text-align:center;font-weight:400">Infinity</div>
<svg class="r" style="left:27px;top:805px;" width="6" height="6" viewBox="0 0 6 6"><path d="M0 0H5.5L0 5.5Z" fill="#008000"/></svg>
<div class="c" style="left:27px;top:805px;width:232px;text-align:left;font-weight:400"><i class="x">2</i>6</div>
<div class="c" style="left:260px;top:805px;width:81px;text-align:right;font-weight:400"><i class="x">0</i>+<i class="x">1</i><i class="x">2</i><i class="x">0</i>.<i class="x">0</i><i class="x">0</i></div>
<svg class="r" style="left:342px;top:805px;" width="6" height="6" viewBox="0 0 6 6"><path d="M0 0H5.5L0 5.5Z" fill="#008000"/></svg>
<div class="c" style="left:342px;top:805px;width:80px;text-align:right;font-weight:400"><i class="d">3</i><i class="x">1</i><i class="x">2</i><i class="x">2</i><i class="x">2</i>6.<i class="d">3</i><i class="x">2</i><i class="d">3</i><i class="x">1</i></div>
<svg class="r" style="left:423px;top:805px;" width="6" height="6" viewBox="0 0 6 6"><path d="M0 0H5.5L0 5.5Z" fill="#008000"/></svg>
<div class="c" style="left:423px;top:805px;width:71px;text-align:right;font-weight:400"><i class="x">2</i><i class="d">3</i><i class="d">7</i><i class="d">7</i><i class="d">3</i>.<i class="x">2</i><i class="x">1</i>6<i class="d">4</i></div>
<svg class="r" style="left:495px;top:805px;" width="6" height="6" viewBox="0 0 6 6"><path d="M0 0H5.5L0 5.5Z" fill="#008000"/></svg>
<div class="c" style="left:495px;top:805px;width:81px;text-align:right;font-weight:400"><i class="d">4</i><i class="x">2</i>.<i class="d">5</i><i class="d">4</i><i class="d">9</i></div>
<div class="c" style="left:577px;top:805px;width:73px;text-align:right;font-weight:400"><i class="x">2</i><i class="d">9</i><i class="x">0</i><u>°</u> <i class="x">2</i><i class="d">7</i>' <i class="x">1</i><i class="d">9</i>&quot;</div>
<svg class="r" style="left:651px;top:805px;" width="6" height="6" viewBox="0 0 6 6"><path d="M0 0H5.5L0 5.5Z" fill="#008000"/></svg>
<div class="c" style="left:651px;top:805px;width:107px;text-align:right;font-weight:400">-<i class="d">9</i><i class="d">9</i>.<i class="x">0</i>6<i class="x">0</i><i class="x">0</i></div>
<svg class="r" style="left:759px;top:805px;" width="6" height="6" viewBox="0 0 6 6"><path d="M0 0H5.5L0 5.5Z" fill="#008000"/></svg>
<div class="c" style="left:759px;top:805px;width:56px;text-align:center;font-weight:400"><i class="x">0</i>.<i class="x">0</i><i class="x">0</i> %</div>
<div class="c" style="left:816px;top:805px;width:84px;text-align:center;font-weight:400">Infinity</div>
<svg class="r" style="left:27px;top:825px;" width="6" height="6" viewBox="0 0 6 6"><path d="M0 0H5.5L0 5.5Z" fill="#008000"/></svg>
<div class="c" style="left:27px;top:825px;width:232px;text-align:left;font-weight:400"><i class="x">2</i><i class="d">7</i></div>
<div class="c" style="left:260px;top:825px;width:81px;text-align:right;font-weight:400"><i class="x">0</i>+<i class="x">1</i><i class="x">2</i><i class="d">5</i>.<i class="x">2</i><i class="x">0</i></div>
<svg class="r" style="left:342px;top:825px;" width="6" height="6" viewBox="0 0 6 6"><path d="M0 0H5.5L0 5.5Z" fill="#008000"/></svg>
<div class="c" style="left:342px;top:825px;width:80px;text-align:right;font-weight:400"><i class="d">3</i><i class="x">1</i><i class="x">2</i><i class="x">2</i><i class="x">2</i><i class="x">1</i>.<i class="d">4</i><i class="x">0</i><i class="d">3</i><i class="d">5</i></div>
<svg class="r" style="left:423px;top:825px;" width="6" height="6" viewBox="0 0 6 6"><path d="M0 0H5.5L0 5.5Z" fill="#008000"/></svg>
<div class="c" style="left:423px;top:825px;width:71px;text-align:right;font-weight:400"><i class="x">2</i><i class="d">3</i><i class="d">7</i><i class="d">7</i><i class="d">4</i>.<i class="d">9</i><i class="x">0</i><i class="d">5</i>6</div>
<svg class="r" style="left:495px;top:825px;" width="6" height="6" viewBox="0 0 6 6"><path d="M0 0H5.5L0 5.5Z" fill="#008000"/></svg>
<div class="c" style="left:495px;top:825px;width:81px;text-align:right;font-weight:400"><i class="d">4</i><i class="x">2</i>.<i class="d">5</i><i class="d">4</i><i class="d">9</i></div>
<div class="c" style="left:577px;top:825px;width:73px;text-align:right;font-weight:400"><i class="x">2</i>8<i class="d">7</i><u>°</u> <i class="x">2</i>6' <i class="d">4</i><i class="d">7</i>&quot;</div>
<svg class="r" style="left:651px;top:825px;" width="6" height="6" viewBox="0 0 6 6"><path d="M0 0H5.5L0 5.5Z" fill="#008000"/></svg>
<div class="c" style="left:651px;top:825px;width:107px;text-align:right;font-weight:400">-<i class="d">9</i><i class="d">9</i>.<i class="x">0</i>6<i class="x">0</i><i class="x">0</i></div>
<svg class="r" style="left:759px;top:825px;" width="6" height="6" viewBox="0 0 6 6"><path d="M0 0H5.5L0 5.5Z" fill="#008000"/></svg>
<div class="c" style="left:759px;top:825px;width:56px;text-align:center;font-weight:400"><i class="x">0</i>.<i class="x">0</i><i class="x">0</i> %</div>
<svg class="r" style="left:816px;top:825px;" width="6" height="6" viewBox="0 0 6 6"><path d="M0 0H5.5L0 5.5Z" fill="#008000"/></svg>
<div class="c" style="left:816px;top:825px;width:84px;text-align:center;font-weight:400">-<i class="d">7</i><i class="x">1</i>8<i class="d">5</i>.<i class="d">3</i><i class="x">1</i><i class="x">1</i>6</div>
<div class="c" style="left:27px;top:206.5px;width:232px;text-align:center;color:#111;font-size:12.5px;-webkit-text-stroke:0">A</div>
<div class="c" style="left:260px;top:206.5px;width:81px;text-align:center;color:#111;font-size:12.5px;-webkit-text-stroke:0">B</div>
<div class="c" style="left:342px;top:206.5px;width:80px;text-align:center;color:#111;font-size:12.5px;-webkit-text-stroke:0">C</div>
<div class="c" style="left:423px;top:206.5px;width:71px;text-align:center;color:#111;font-size:12.5px;-webkit-text-stroke:0">D</div>
<div class="c" style="left:495px;top:206.5px;width:81px;text-align:center;color:#111;font-size:12.5px;-webkit-text-stroke:0">E</div>
<div class="c" style="left:577px;top:206.5px;width:73px;text-align:center;color:#111;font-size:12.5px;-webkit-text-stroke:0">F</div>
<div class="c" style="left:651px;top:206.5px;width:107px;text-align:center;color:#111;font-size:12.5px;-webkit-text-stroke:0">G</div>
<div class="c" style="left:759px;top:206.5px;width:56px;text-align:center;color:#111;font-size:12.5px;-webkit-text-stroke:0">H</div>
<div class="c" style="left:816px;top:206.5px;width:84px;text-align:center;color:#111;font-size:12.5px;-webkit-text-stroke:0">I</div>
<div class="c" style="left:901px;top:206.5px;width:63px;text-align:center;color:#111;font-size:12.5px;-webkit-text-stroke:0">J</div>
<div class="c" style="left:965px;top:206.5px;width:63px;text-align:center;color:#217346;font-size:12.5px;-webkit-text-stroke:0">K</div>
<div class="c" style="left:1029px;top:206.5px;width:63px;text-align:center;color:#111;font-size:12.5px;-webkit-text-stroke:0">L</div>
<div class="c" style="left:1093px;top:206.5px;width:63px;text-align:center;color:#111;font-size:12.5px;-webkit-text-stroke:0">M</div>
<div class="c" style="left:1157px;top:206.5px;width:63px;text-align:center;color:#111;font-size:12.5px;-webkit-text-stroke:0">N</div>
<div class="c" style="left:1221px;top:206.5px;width:63px;text-align:center;color:#111;font-size:12.5px;-webkit-text-stroke:0">O</div>
<div class="c" style="left:1px;top:226.5px;width:25px;text-align:center;color:#111;font-size:13px;padding:0">1</div>
<div class="c" style="left:1px;top:246.5px;width:25px;text-align:center;color:#111;font-size:13px;padding:0">2</div>
<div class="c" style="left:1px;top:266.5px;width:25px;text-align:center;color:#111;font-size:13px;padding:0">3</div>
<div class="c" style="left:1px;top:286.5px;width:25px;text-align:center;color:#111;font-size:13px;padding:0">4</div>
<div class="c" style="left:1px;top:306.5px;width:25px;text-align:center;color:#111;font-size:13px;padding:0">5</div>
<div class="c" style="left:1px;top:326.5px;width:25px;text-align:center;color:#111;font-size:13px;padding:0">6</div>
<div class="c" style="left:1px;top:346.5px;width:25px;text-align:center;color:#111;font-size:13px;padding:0">7</div>
<div class="c" style="left:1px;top:366.5px;width:25px;text-align:center;color:#217346;font-size:13px;padding:0">8</div>
<div class="c" style="left:1px;top:386.5px;width:25px;text-align:center;color:#111;font-size:13px;padding:0">9</div>
<div class="c" style="left:1px;top:406.5px;width:25px;text-align:center;color:#111;font-size:13px;padding:0">10</div>
<div class="c" style="left:1px;top:426.5px;width:25px;text-align:center;color:#111;font-size:13px;padding:0">11</div>
<div class="c" style="left:1px;top:446.5px;width:25px;text-align:center;color:#111;font-size:13px;padding:0">12</div>
<div class="c" style="left:1px;top:466.5px;width:25px;text-align:center;color:#111;font-size:13px;padding:0">13</div>
<div class="c" style="left:1px;top:486.5px;width:25px;text-align:center;color:#111;font-size:13px;padding:0">14</div>
<div class="c" style="left:1px;top:506.5px;width:25px;text-align:center;color:#111;font-size:13px;padding:0">15</div>
<div class="c" style="left:1px;top:526.5px;width:25px;text-align:center;color:#111;font-size:13px;padding:0">16</div>
<div class="c" style="left:1px;top:546.5px;width:25px;text-align:center;color:#111;font-size:13px;padding:0">17</div>
<div class="c" style="left:1px;top:566.5px;width:25px;text-align:center;color:#111;font-size:13px;padding:0">18</div>
<div class="c" style="left:1px;top:586.5px;width:25px;text-align:center;color:#111;font-size:13px;padding:0">19</div>
<div class="c" style="left:1px;top:606.5px;width:25px;text-align:center;color:#111;font-size:13px;padding:0">20</div>
<div class="c" style="left:1px;top:626.5px;width:25px;text-align:center;color:#111;font-size:13px;padding:0">21</div>
<div class="c" style="left:1px;top:646.5px;width:25px;text-align:center;color:#111;font-size:13px;padding:0">22</div>
<div class="c" style="left:1px;top:666.5px;width:25px;text-align:center;color:#111;font-size:13px;padding:0">23</div>
<div class="c" style="left:1px;top:686.5px;width:25px;text-align:center;color:#111;font-size:13px;padding:0">24</div>
<div class="c" style="left:1px;top:706.5px;width:25px;text-align:center;color:#111;font-size:13px;padding:0">25</div>
<div class="c" style="left:1px;top:726.5px;width:25px;text-align:center;color:#111;font-size:13px;padding:0">26</div>
<div class="c" style="left:1px;top:746.5px;width:25px;text-align:center;color:#111;font-size:13px;padding:0">27</div>
<div class="c" style="left:1px;top:766.5px;width:25px;text-align:center;color:#111;font-size:13px;padding:0">28</div>
<div class="c" style="left:1px;top:786.5px;width:25px;text-align:center;color:#111;font-size:13px;padding:0">29</div>
<div class="c" style="left:1px;top:806.5px;width:25px;text-align:center;color:#111;font-size:13px;padding:0">30</div>
<div class="c" style="left:1px;top:826.5px;width:25px;text-align:center;color:#111;font-size:13px;padding:0">31</div>
<div class="r" style="left:964px;top:223px;width:65px;height:2px;background:#217346;"></div>
<div class="r" style="left:25px;top:365px;width:2px;height:20px;background:#217346;"></div>
<div class="r" style="left:963px;top:363px;width:67px;height:2px;background:#217346;"></div>
<div class="r" style="left:963px;top:384px;width:64px;height:2px;background:#217346;"></div>
<div class="r" style="left:963px;top:363px;width:2px;height:23px;background:#217346;"></div>
<div class="r" style="left:1028px;top:363px;width:2px;height:19px;background:#217346;"></div>
<div class="r" style="left:1025px;top:381px;width:7px;height:7px;background:#fff;"></div>
<div class="r" style="left:1026px;top:382px;width:6px;height:6px;background:#217346;"></div>
<div class="r" style="left:1267px;top:205px;width:21px;height:640px;background:#E6E6E6;"></div>
<div class="r" style="left:1266px;top:205px;width:1px;height:19px;background:#E6E6E6;"></div>
<div class="r" style="left:1270px;top:207px;width:15px;height:15px;background:#fff;box-sizing:border-box;border:1px solid #C6C6C6;"></div>
<svg class="r" style="left:1273px;top:212px;" width="9" height="5" viewBox="0 0 9 5"><path d="M0 5L4.5 0L9 5Z" fill="#777"/></svg>
<div class="r" style="left:1270px;top:222px;width:15px;height:148px;background:#fff;box-sizing:border-box;border:1px solid #ABABAB;"></div>
<div class="r" style="left:1270px;top:370px;width:15px;height:461px;background:#DADADA;"></div>
<div class="r" style="left:1270px;top:831px;width:15px;height:14px;background:#fff;box-sizing:border-box;border:1px solid #C6C6C6;"></div>
<svg class="r" style="left:1273px;top:836px;" width="9" height="5" viewBox="0 0 9 5"><path d="M0 0L4.5 5L9 0Z" fill="#777"/></svg>
<div class="r" style="left:1px;top:845px;width:1287px;height:28px;background:#E6E6E6;"></div>
<div class="r" style="left:1px;top:873px;width:1287px;height:1px;background:#D0D0D0;"></div>
<svg class="r" style="left:29px;top:853px;" width="5" height="9" viewBox="0 0 5 9"><path d="M5 0V9L0 4.5Z" fill="#c0c0c0"/></svg>
<svg class="r" style="left:57px;top:853px;" width="5" height="9" viewBox="0 0 5 9"><path d="M0 0V9L5 4.5Z" fill="#c0c0c0"/></svg>
<div class="r" style="left:101px;top:849px;width:1px;height:20px;background:#BDBDBD;"></div>
<div class="t" style="left:114px;top:848.50px;font-size:13px;color:#444;font-weight:400;">Report Header</div>
<div class="r" style="left:214px;top:845px;width:124px;height:25px;background:#fff;"></div>
<div class="r" style="left:214px;top:868px;width:124px;height:2px;background:#217346;"></div>
<div class="r" style="left:213px;top:845px;width:1px;height:25px;background:#C6C6C6;"></div>
<div class="r" style="left:338px;top:845px;width:1px;height:25px;background:#C6C6C6;"></div>
<div class="t" style="left:226px;top:848.63px;font-size:12.6px;color:#217346;font-weight:700;">1. Second Street</div>
<div class="t" style="left:350px;top:848.50px;font-size:13px;color:#444;font-weight:400;">Report Footer</div>
<div class="r" style="left:445px;top:849px;width:1px;height:20px;background:#BDBDBD;"></div>
<svg class="r" style="left:478px;top:850px;" width="17" height="17" viewBox="0 0 17 17"><circle cx="8.5" cy="8.5" r="7.5" fill="none" stroke="#777" stroke-width="1.2"/><path d="M8.5 4.5V12.5M4.5 8.5H12.5" stroke="#777" stroke-width="1.5"/></svg>
<svg class="r" style="left:772px;top:853px;" width="3" height="12" viewBox="0 0 3 12"><circle cx="1.5" cy="1.5" r="1" fill="#aaa"/><circle cx="1.5" cy="6" r="1" fill="#aaa"/><circle cx="1.5" cy="10.5" r="1" fill="#aaa"/></svg>
<div class="r" style="left:790px;top:852px;width:15px;height:15px;background:#fff;box-sizing:border-box;border:1px solid #ABABAB;"></div>
<svg class="r" style="left:795px;top:855px;" width="5" height="9" viewBox="0 0 5 9"><path d="M5 0V9L0 4.5Z" fill="#666"/></svg>
<div class="r" style="left:805px;top:852px;width:414px;height:15px;background:#fff;box-sizing:border-box;border:1px solid #ABABAB;"></div>
<div class="r" style="left:1219px;top:852px;width:33px;height:15px;background:#DADADA;"></div>
<div class="r" style="left:1252px;top:852px;width:15px;height:15px;background:#fff;box-sizing:border-box;border:1px solid #ABABAB;"></div>
<svg class="r" style="left:1258px;top:855px;" width="5" height="9" viewBox="0 0 5 9"><path d="M0 0V9L5 4.5Z" fill="#666"/></svg>
<div class="r" style="left:1px;top:874px;width:1287px;height:21px;background:#F1F1F1;"></div>
<div class="t" style="left:8px;top:874.69px;font-size:11px;color:#444;font-weight:400;">Ready</div>
<div class="r" style="left:986px;top:874px;width:34px;height:21px;background:#C8C8C8;"></div>
<svg class="r" style="left:994px;top:877px;" width="16" height="15" viewBox="0 0 16 15"><path d="M0.5 0.5H15.5V14.5H0.5ZM0.5 5H15.5M0.5 9.8H15.5M5.5 0.5V14.5M10.5 0.5V14.5" fill="none" stroke="#666" stroke-width="1"/></svg>
<svg class="r" style="left:1034px;top:877px;" width="15" height="15" viewBox="0 0 15 15"><path d="M0.5 0.5H14.5V14.5H0.5Z" fill="none" stroke="#666"/><path d="M3.5 3.5H11.5V11.5H3.5Z" fill="none" stroke="#666"/><path d="M5 5.5H10M5 7.5H10M5 9.5H10" stroke="#666"/></svg>
<svg class="r" style="left:1071px;top:876px;" width="15" height="15" viewBox="0 0 15 15"><path d="M0.5 0.5H14.5V14.5H0.5Z" fill="none" stroke="#666"/><path d="M7.5 0.5V8.5H0.5M7.5 8.5H14.5" fill="none" stroke="#666"/></svg>
<div class="r" style="left:1104px;top:883px;width:7px;height:2px;background:#555;"></div>
<div class="r" style="left:1115px;top:883px;width:99px;height:1px;background:#bbb;"></div>
<div class="r" style="left:1162px;top:878px;width:4px;height:11px;background:#666;"></div>
<svg class="r" style="left:1218px;top:879px;" width="9" height="9" viewBox="0 0 9 9"><path d="M4.5 0V9M0 4.5H9" stroke="#444" stroke-width="2"/></svg>
<div class="t" style="left:1243px;top:874.19px;font-size:11px;color:#555;font-weight:400;">100%</div></body></html>
